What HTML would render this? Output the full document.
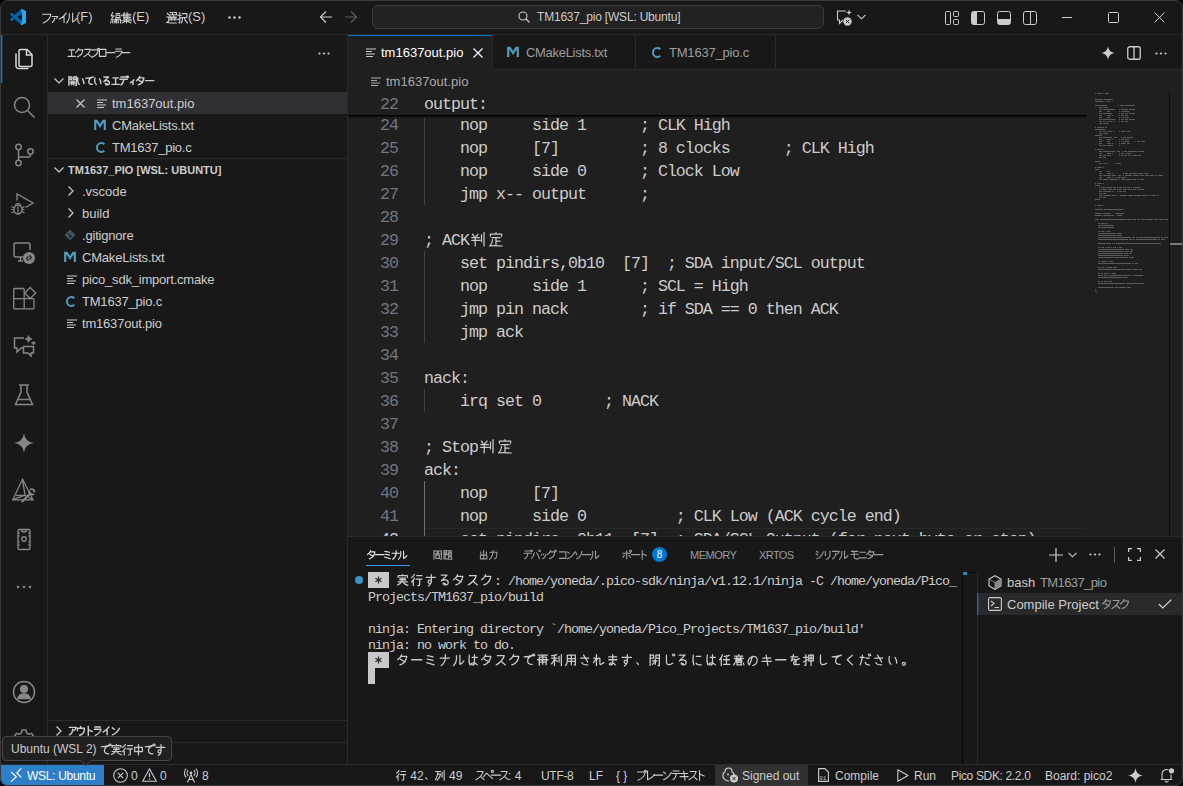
<!DOCTYPE html><html><head><meta charset="utf-8"><style>
*{box-sizing:border-box;margin:0;padding:0}
html,body{width:1183px;height:786px;overflow:hidden;background:#000}
body{font-family:"Liberation Sans",sans-serif;font-size:13px;color:#cccccc;position:relative}
.a{position:absolute}
#win{position:absolute;left:0;top:0;width:1183px;height:786px;background:#181818;border-radius:8px;overflow:hidden}
#frame{position:absolute;left:0;top:0;width:1183px;height:786px;border:1px solid #3a3a3a;border-radius:8px;pointer-events:none;z-index:50}
.hl{position:absolute;height:1px;background:#2b2b2b}
.vl{position:absolute;width:1px;background:#2b2b2b}
.t{position:absolute;white-space:pre;line-height:16px}
.t i,.code i,.term i{display:inline-block;font-style:normal;vertical-align:top;position:relative}
svg{position:absolute;overflow:visible}
.code{position:absolute;left:424px;font-family:"Liberation Mono",monospace;font-size:16.6667px;letter-spacing:-1px;white-space:pre;color:#cccccc;line-height:23px;height:23px}
.ln{position:absolute;left:340px;width:58px;text-align:right;font-family:"Liberation Mono",monospace;font-size:16.6667px;letter-spacing:-1px;white-space:pre;color:#6e7681;line-height:23px;height:23px}
.term{position:absolute;left:368px;font-family:"Liberation Mono",monospace;font-size:13.3333px;letter-spacing:-1px;white-space:pre;color:#cccccc;line-height:16px;height:16px}
.mm{position:absolute;height:1px;background:#8a8a8a;opacity:.55}
</style></head><body><div id="win">
<svg style="left:10px;top:9px" width="16" height="16" viewBox="0 0 100 100"><path fill="#0065A9" d="M96.5 10.8 75.9.9a6.2 6.2 0 0 0-7.1 1.2L29.4 38 12.2 25a4.2 4.2 0 0 0-5.3.2l-5.5 5a4.2 4.2 0 0 0 0 6.2L16.3 50 1.4 63.6a4.2 4.2 0 0 0 0 6.2l5.5 5a4.2 4.2 0 0 0 5.3.2l17.2-13 39.4 35.9a6.2 6.2 0 0 0 7.1 1.2l20.6-9.9a6.2 6.2 0 0 0 3.5-5.6V16.4a6.2 6.2 0 0 0-3.5-5.6zM75 72.7 45.1 50 75 27.3z"/><path fill="#2AA7F0" d="M96.5 10.8 75.9.9a6.2 6.2 0 0 0-7.1 1.2L75 27.3V72.7l-6.2 25.2a6.2 6.2 0 0 0 7.1 1.2l20.6-9.9a6.2 6.2 0 0 0 3.5-5.6V16.4a6.2 6.2 0 0 0-3.5-5.6z"/></svg>
<div class="t" style="left:42px;top:9px;font-size:13px;color:#cccccc;line-height:16px;"><i style="width:8.5px;height:16px"><svg style="left:-1.25px;top:2.50px" width="11.0" height="11.0" viewBox="0 0 10 10"><path d="M1.5 2h7.5c-.5 3.5-3 6.5-7 8" stroke="#cccccc" stroke-width="1.00" fill="none" stroke-linecap="round" stroke-linejoin="round"/></svg></i><i style="width:8.5px;height:16px"><svg style="left:-1.25px;top:2.50px" width="11.0" height="11.0" viewBox="0 0 10 10"><path transform="translate(1.5 3) scale(0.7)" d="M1.5 1.5h7.5c-.5 1.5-1.5 2.5-2.5 3.2M5 3.5c0 3-1 5-3.5 6" stroke="#cccccc" stroke-width="1.43" fill="none"/></svg></i><i style="width:8.5px;height:16px"><svg style="left:-1.25px;top:2.50px" width="11.0" height="11.0" viewBox="0 0 10 10"><path d="M7.5 1c-1.5 2.5-3.5 4-6.5 5.5M5.5 4v5.5" stroke="#cccccc" stroke-width="1.00" fill="none" stroke-linecap="round" stroke-linejoin="round"/></svg></i><i style="width:8.5px;height:16px"><svg style="left:-1.25px;top:2.50px" width="11.0" height="11.0" viewBox="0 0 10 10"><path d="M3 1.5v3c0 2-1 4-2.5 5.5M6 1v8c1.5-.5 2.5-1.5 3.5-3" stroke="#cccccc" stroke-width="1.00" fill="none" stroke-linecap="round" stroke-linejoin="round"/></svg></i>(F)</div>
<div class="t" style="left:110px;top:9px;font-size:13px;color:#cccccc;line-height:16px;"><i style="width:11px;height:16px"><svg style="left:0.00px;top:2.50px" width="11.0" height="11.0" viewBox="0 0 10 10"><path d="M2.5 .5 1 3.5h2.5L1 7h3.5M2.5 7v3M1 8.5 .5 10M4 8.5l.5 1.5M5.5 1.5h3.5M5.5 3h3.5v2H5.5V3c0 3-.5 5-1 7M6 6.5h3.5V10M6 6.5V10M7.5 6.5V10" stroke="#cccccc" stroke-width="1.00" fill="none" stroke-linecap="round" stroke-linejoin="round"/></svg></i><i style="width:11px;height:16px"><svg style="left:0.00px;top:2.50px" width="11.0" height="11.0" viewBox="0 0 10 10"><path d="M3 .5C2.5 2 1.5 3 .5 3.5M2.5 2.5v4M3 2h6M3 3.5h5.5M3 5h5.5M3 6.5h6M5.5 .5v6M.5 8h9M5 6.5v3.5M5 8 1 10M5 8l4 2" stroke="#cccccc" stroke-width="1.00" fill="none" stroke-linecap="round" stroke-linejoin="round"/></svg></i>(E)</div>
<div class="t" style="left:166px;top:9px;font-size:13px;color:#cccccc;line-height:16px;"><i style="width:11px;height:16px"><svg style="left:0.00px;top:2.50px" width="11.0" height="11.0" viewBox="0 0 10 10"><path d="M3.5 .5h2.5v2H3.5v2H6M7 .5h2.5v2H7v2h2.5M3.5 5.5h6M3.5 7h6M5 4.5v3M8 4.5v3M1 1l1.5 1.5M.5 4.5h2v4L.5 9.5c3 .5 6 .5 9 .5" stroke="#cccccc" stroke-width="1.00" fill="none" stroke-linecap="round" stroke-linejoin="round"/></svg></i><i style="width:11px;height:16px"><svg style="left:0.00px;top:2.50px" width="11.0" height="11.0" viewBox="0 0 10 10"><path d="M.5 3h3.5M2.5 .5v9c0 .5-.5.5-1 .3M.5 7l3.5-2M5 1.5h4v3.5H5c0 3-.5 4-1 5M6.5 5c.5 2 1.5 3.5 3 5" stroke="#cccccc" stroke-width="1.00" fill="none" stroke-linecap="round" stroke-linejoin="round"/></svg></i>(S)</div>
<svg style="left:228px;top:16px" width="13" height="3"><circle cx="1.5" cy="1.5" r="1.2" fill="#ccc"/><circle cx="6.5" cy="1.5" r="1.2" fill="#ccc"/><circle cx="11.5" cy="1.5" r="1.2" fill="#ccc"/></svg>
<svg style="left:319px;top:10px" width="14" height="14" viewBox="0 0 14 14"><path d="M13 7H1.5M7 1.5 1.5 7 7 12.5" stroke="#cccccc" stroke-width="1.2" fill="none"/></svg>
<svg style="left:344px;top:10px" width="14" height="14" viewBox="0 0 14 14"><path d="M1 7h11.5M7 1.5 12.5 7 7 12.5" stroke="#5c5c5c" stroke-width="1.2" fill="none"/></svg>
<div class="a" style="left:372px;top:5px;width:452px;height:24px;border:1px solid #3c3c3c;border-radius:6px;background:#222222"></div>
<svg style="left:518px;top:11px" width="12" height="12" viewBox="0 0 12 12"><circle cx="5" cy="5" r="4" stroke="#cccccc" stroke-width="1.1" fill="none"/><path d="M8 8 11.5 11.5" stroke="#cccccc" stroke-width="1.2"/></svg>
<div class="t" style="left:537px;top:9px;font-size:12px;color:#cccccc;line-height:16px;letter-spacing:-0.2px;">TM1637_pio [WSL: Ubuntu]</div>
<svg style="left:836px;top:9px" width="18" height="17" viewBox="0 0 18 17"><path d="M10 2H1.5v9H3.5v3.5L7 11" stroke="#cccccc" stroke-width="1.1" fill="none"/><path d="M13 0.5 13.8 2.7 16 3.5 13.8 4.3 13 6.5 12.2 4.3 10 3.5 12.2 2.7Z" fill="#cccccc"/><circle cx="11.5" cy="12.5" r="4.2" fill="#cccccc"/><path d="M9.9 10.9 13.1 14.1M13.1 10.9 9.9 14.1" stroke="#181818" stroke-width="1"/></svg>
<svg style="left:857px;top:14px" width="9" height="6" viewBox="0 0 9 6"><path d="M0.5 0.8 4.5 4.8 8.5 0.8" stroke="#cccccc" stroke-width="1.1" fill="none"/></svg>
<svg style="left:944px;top:10px" width="16" height="16" viewBox="0 0 16 16"><rect x="1.5" y="1.5" width="5" height="13" rx="1" stroke="#cccccc" fill="none"/><rect x="9.5" y="1.5" width="5" height="5" rx="1" stroke="#cccccc" fill="none"/><rect x="9.5" y="9.5" width="5" height="5" rx="1" stroke="#cccccc" fill="none"/></svg>
<svg style="left:970px;top:10px" width="16" height="16" viewBox="0 0 16 16"><rect x="1.5" y="1.5" width="13" height="13" rx="2" stroke="#cccccc" fill="none"/><path d="M2 2h5v12H2z" fill="#cccccc"/></svg>
<svg style="left:996px;top:10px" width="16" height="16" viewBox="0 0 16 16"><rect x="1.5" y="1.5" width="13" height="13" rx="2" stroke="#cccccc" fill="none"/><path d="M2 9h12v5H2z" fill="#cccccc"/></svg>
<svg style="left:1022px;top:10px" width="16" height="16" viewBox="0 0 16 16"><rect x="1.5" y="1.5" width="13" height="13" rx="2" stroke="#cccccc" fill="none"/><path d="M8.5 2v12" stroke="#cccccc"/></svg>
<svg style="left:1062px;top:17px" width="11" height="2"><rect x="0" y="0" width="10" height="1" fill="#cccccc"/></svg>
<svg style="left:1108px;top:12px" width="11" height="11"><rect x="0.5" y="0.5" width="10" height="10" rx="1" stroke="#cccccc" fill="none"/></svg>
<svg style="left:1154px;top:12px" width="11" height="11" viewBox="0 0 11 11"><path d="M0.5 0.5 10.5 10.5M10.5 0.5 0.5 10.5" stroke="#cccccc" stroke-width="1"/></svg>
<div class="hl" style="left:0;top:34px;width:1183px"></div>
<div class="vl" style="left:47px;top:35px;height:730px"></div>
<div class="a" style="left:1px;top:35px;width:1px;height:48px;background:#0078d4;box-shadow:1px 0 0 rgba(0,120,212,0.35)"></div>
<svg style="left:12px;top:47px" width="24" height="24" viewBox="0 0 24 24" fill="none" stroke="#d7d7d7" stroke-width="1.5"><path d="M8.5 2.5h6.5l5 5v10.5a1.5 1.5 0 0 1-1.5 1.5h-10a1.5 1.5 0 0 1-1.5-1.5V4a1.5 1.5 0 0 1 1.5-1.5z"/><path d="M14.5 2.5v5.5h5.5"/><path d="M4 6.5v12.5a2.5 2.5 0 0 0 2.5 2.5h10"/></svg>
<svg style="left:12px;top:95px" width="24" height="24" viewBox="0 0 24 24" fill="none" stroke="#868686" stroke-width="1.5"><circle cx="10" cy="10" r="7.5"/><path d="M15.5 15.5 22.5 22.5"/></svg>
<svg style="left:12px;top:143px" width="24" height="24" viewBox="0 0 24 24" fill="none" stroke="#868686" stroke-width="1.5"><circle cx="6.5" cy="4" r="2.7"/><circle cx="6.5" cy="20" r="2.7"/><circle cx="18.5" cy="8.5" r="2.7"/><path d="M6.5 6.7v10.6M18.5 11.2v0.8a2 2 0 0 1-2 2H6.5"/></svg>
<svg style="left:10px;top:192px" width="24" height="24" viewBox="0 0 24 24" fill="none" stroke="#868686" stroke-width="1.4"><path d="M7 8.5V2L23 11 15.5 15.5"/><path d="M4 17.5a4 4.5 0 0 1 8 0v0a4 4.5 0 0 1-8 0z"/><path d="M5.5 13.5a2.5 2 0 0 1 5 0M1.5 14.5l2.5 1.5M14.5 14.5 12 16M1.5 17.5h2.5M12 17.5h2.5M1.5 21l2.5-1.5M14.5 21 12 19.5M8 14.5v7.5" stroke-width="1.2"/></svg>
<svg style="left:12px;top:241px" width="24" height="24" viewBox="0 0 24 24" fill="none" stroke="#868686" stroke-width="1.5"><path d="M11 16H3.5A1.5 1.5 0 0 1 2 14.5v-11A1.5 1.5 0 0 1 3.5 2h13A1.5 1.5 0 0 1 18 3.5V9"/><path d="M6 20h5M8.5 16v4"/><circle cx="17" cy="17" r="6" fill="#868686" stroke="none"/><path d="M14.5 17.5l2-2M14.5 17.5l2 2M19.5 16.5l-2-2M19.5 16.5l-2 2" stroke="#181818" stroke-width="1.2"/></svg>
<svg style="left:12px;top:286px" width="24" height="24" viewBox="0 0 24 24" fill="none" stroke="#868686" stroke-width="1.3"><path d="M1.7 12.7V3.5a1 1 0 0 1 1-1h8.5a1 1 0 0 1 1 1v9.2H21a1 1 0 0 1 1 1v8.2a1 1 0 0 1-1 1H2.7a1 1 0 0 1-1-1z M1.7 12.7H12.2V22.9"/><path d="M18.2 1.5 23.7 7 18.2 12.5 12.7 7z"/></svg>
<svg style="left:12px;top:335px" width="24" height="24" viewBox="0 0 24 24" fill="none" stroke="#868686" stroke-width="1.5"><path d="M12 3H2.5v10h2.5v4l4-4h2"/><path d="M11.5 11.5h10v6.5h-2.5v3l-3-3h-4.5z"/><path d="M16.5 0.5l1 2.5 2.5 1-2.5 1-1 2.5-1-2.5-2.5-1 2.5-1z M21.5 6l.6 1.4 1.4.6-1.4.6-.6 1.4-.6-1.4-1.4-.6 1.4-.6z" fill="#868686" stroke-width="0.8"/></svg>
<svg style="left:12px;top:383px" width="24" height="24" viewBox="0 0 24 24" fill="none" stroke="#868686" stroke-width="1.5"><path d="M7 2h10M9 2v7L3.5 21.5h17L15 9V2"/><path d="M5.8 16.5h12.4"/></svg>
<svg style="left:14px;top:433px" width="20" height="20" viewBox="0 0 20 20"><path d="M10 0C10.8 6 14 9.2 20 10 14 10.8 10.8 14 10 20 9.2 14 6 10.8 0 10 6 9.2 9.2 6 10 0z" fill="#868686"/></svg>
<svg style="left:12px;top:477px" width="24" height="24" viewBox="0 0 24 24" fill="none" stroke="#868686" stroke-width="1.3"><path d="M10.5 2.3 0.8 22.8H21z M10.5 2.3 13 18.2 0.8 22.8M13 18.2 21 22.8M4 18.5 13 18.2"/><path d="M9.8 25 19 15.5" stroke-width="2"/><path d="M17.5 13.5a3 3 0 0 0 4.5 3.5M18 12.5a3 3 0 0 1 4.5 3" stroke-width="1.8"/></svg>
<svg style="left:12px;top:527px" width="24" height="24" viewBox="0 0 24 24" fill="none" stroke="#868686" stroke-width="1.4"><rect x="6" y="2.5" width="12" height="20" rx="1.5"/><circle cx="12" cy="12" r="2.2"/><path d="M9.5 2.5a2.5 2.5 0 0 0 5 0"/><path d="M6 6h2M6 9h2M6 15h2M6 18h2M16 6h2M16 9h2M16 15h2M16 18h2" stroke-width="1"/></svg>
<svg style="left:16px;top:585px" width="16" height="4"><circle cx="2" cy="2" r="1.3" fill="#868686"/><circle cx="8" cy="2" r="1.3" fill="#868686"/><circle cx="14" cy="2" r="1.3" fill="#868686"/></svg>
<svg style="left:12px;top:680px" width="24" height="24" viewBox="0 0 24 24" fill="none" stroke="#868686" stroke-width="1.5"><circle cx="12" cy="12" r="10.5"/><circle cx="12" cy="9" r="3.3" fill="#868686"/><path d="M6 18.5a6 4.5 0 0 1 12 0z" fill="#868686"/></svg>
<svg style="left:12px;top:728px" width="24" height="24" viewBox="0 0 24 24" fill="none" stroke="#868686" stroke-width="1.5"><path d="M10 2h4l.6 3 2.2 1.3 2.9-1 2 3.4-2.3 2v2.6l2.3 2-2 3.4-2.9-1-2.2 1.3-.6 3h-4l-.6-3-2.2-1.3-2.9 1-2-3.4 2.3-2v-2.6l-2.3-2 2-3.4 2.9 1L9.4 5z"/><circle cx="12" cy="12" r="3"/></svg>
<div class="vl" style="left:347px;top:35px;height:730px"></div>
<div class="t" style="left:68px;top:45px;font-size:11px;color:#cccccc;line-height:16px;"><i style="width:7.75px;height:16px"><svg style="left:-0.78px;top:3.35px" width="9.3" height="9.3" viewBox="0 0 10 10"><path d="M2 2h6M5 2v7M1 9h8" stroke="#cccccc" stroke-width="1.18" fill="none" stroke-linecap="round" stroke-linejoin="round"/></svg></i><i style="width:7.75px;height:16px"><svg style="left:-0.78px;top:3.35px" width="9.3" height="9.3" viewBox="0 0 10 10"><path d="M4 0.5c-.5 2-2 3.5-3.5 4.5M3.5 2h5c-.5 4-3 6.5-6 7.5" stroke="#cccccc" stroke-width="1.18" fill="none" stroke-linecap="round" stroke-linejoin="round"/></svg></i><i style="width:7.75px;height:16px"><svg style="left:-0.78px;top:3.35px" width="9.3" height="9.3" viewBox="0 0 10 10"><path d="M2 1.5h6c-1 3.5-3.5 6-7 8M5.5 6.5l3.5 3" stroke="#cccccc" stroke-width="1.18" fill="none" stroke-linecap="round" stroke-linejoin="round"/></svg></i><i style="width:7.75px;height:16px"><svg style="left:-0.78px;top:3.35px" width="9.3" height="9.3" viewBox="0 0 10 10"><path d="M1.5 2h7.5c-.5 3.5-3 6.5-7 8M9.2 1.3m-1 0a1 1 0 1 0 2 0a1 1 0 1 0-2 0" stroke="#cccccc" stroke-width="1.18" fill="none" stroke-linecap="round" stroke-linejoin="round"/></svg></i><i style="width:7.75px;height:16px"><svg style="left:-0.78px;top:3.35px" width="9.3" height="9.3" viewBox="0 0 10 10"><path d="M1.5 1.5h7v7.5h-7z" stroke="#cccccc" stroke-width="1.18" fill="none" stroke-linecap="round" stroke-linejoin="round"/></svg></i><i style="width:7.75px;height:16px"><svg style="left:-0.78px;top:3.35px" width="9.3" height="9.3" viewBox="0 0 10 10"><path d="M0.5 5h9" stroke="#cccccc" stroke-width="1.18" fill="none" stroke-linecap="round" stroke-linejoin="round"/></svg></i><i style="width:7.75px;height:16px"><svg style="left:-0.78px;top:3.35px" width="9.3" height="9.3" viewBox="0 0 10 10"><path d="M2 1h6M1.5 3.5h7c-.5 3-2.5 5-6 6.5" stroke="#cccccc" stroke-width="1.18" fill="none" stroke-linecap="round" stroke-linejoin="round"/></svg></i><i style="width:7.75px;height:16px"><svg style="left:-0.78px;top:3.35px" width="9.3" height="9.3" viewBox="0 0 10 10"><path d="M0.5 5h9" stroke="#cccccc" stroke-width="1.18" fill="none" stroke-linecap="round" stroke-linejoin="round"/></svg></i></div>
<svg style="left:318px;top:52px" width="12" height="3"><circle cx="1.5" cy="1.5" r="1.1" fill="#ccc"/><circle cx="6" cy="1.5" r="1.1" fill="#ccc"/><circle cx="10.5" cy="1.5" r="1.1" fill="#ccc"/></svg>
<svg style="left:54px;top:78px" width="10" height="6" viewBox="0 0 10 6"><path d="M0.5 0.5 5 5 9.5 0.5" stroke="#cccccc" stroke-width="1.2" fill="none"/></svg>
<div class="t" style="left:68px;top:73px;font-size:11px;color:#cccccc;line-height:16px;font-weight:bold;"><i style="width:8.6px;height:16px"><svg style="left:-0.35px;top:3.35px" width="9.3" height="9.3" viewBox="0 0 10 10"><path d="M1 .5v9.5M1 1h3v2.5H1M9 .5v9.5H8M9 1H6v2.5h3M3 5.5h4M2.5 7.5h5M4 5.5v4M6 5.5v4" stroke="#cccccc" stroke-width="1.56" fill="none" stroke-linecap="round" stroke-linejoin="round"/></svg></i><i style="width:8.6px;height:16px"><svg style="left:-0.35px;top:3.35px" width="9.3" height="9.3" viewBox="0 0 10 10"><path d="M2 2c-.5 3 0 6 1.5 7M7 3c1 1.5 1.5 3 1.5 5" stroke="#cccccc" stroke-width="1.56" fill="none" stroke-linecap="round" stroke-linejoin="round"/></svg></i><i style="width:8.6px;height:16px"><svg style="left:-0.35px;top:3.35px" width="9.3" height="9.3" viewBox="0 0 10 10"><path d="M1 2.5c2.5 0 5-.5 8-1.5-3 1-5 3-5 5s1.5 3 4 3" stroke="#cccccc" stroke-width="1.56" fill="none" stroke-linecap="round" stroke-linejoin="round"/></svg></i><i style="width:8.6px;height:16px"><svg style="left:-0.35px;top:3.35px" width="9.3" height="9.3" viewBox="0 0 10 10"><path d="M2 2c-.5 3 0 6 1.5 7M7 3c1 1.5 1.5 3 1.5 5" stroke="#cccccc" stroke-width="1.56" fill="none" stroke-linecap="round" stroke-linejoin="round"/></svg></i><i style="width:8.6px;height:16px"><svg style="left:-0.35px;top:3.35px" width="9.3" height="9.3" viewBox="0 0 10 10"><path d="M2 1h5L2 6c2-1.5 6-1.5 6 1.5 0 2-3 2.5-4 1.5s0-1.5 1.5-.5" stroke="#cccccc" stroke-width="1.56" fill="none" stroke-linecap="round" stroke-linejoin="round"/></svg></i><i style="width:8.6px;height:16px"><svg style="left:-0.35px;top:3.35px" width="9.3" height="9.3" viewBox="0 0 10 10"><path d="M2 2h6M5 2v7M1 9h8" stroke="#cccccc" stroke-width="1.56" fill="none" stroke-linecap="round" stroke-linejoin="round"/></svg></i><i style="width:8.6px;height:16px"><svg style="left:-0.35px;top:3.35px" width="9.3" height="9.3" viewBox="0 0 10 10"><path d="M2 1h6M1 3.5h8M5 3.5c0 3-1 5-3 6M8.2 0.3l.7 1.4M9.5 0l.7 1.4" stroke="#cccccc" stroke-width="1.56" fill="none" stroke-linecap="round" stroke-linejoin="round"/></svg></i><i style="width:8.6px;height:16px"><svg style="left:-0.35px;top:3.35px" width="9.3" height="9.3" viewBox="0 0 10 10"><path transform="translate(1.5 3) scale(0.7)" d="M7.5 1c-1.5 2.5-3.5 4-6.5 5.5M5.5 4v5.5" stroke="#cccccc" stroke-width="2.23" fill="none"/></svg></i><i style="width:8.6px;height:16px"><svg style="left:-0.35px;top:3.35px" width="9.3" height="9.3" viewBox="0 0 10 10"><path d="M4 0.5c-.5 2-2 3.5-3.5 4.5M3.5 2h5c-.5 4-3 6.5-6 7.5M3 4.5l4 2.5" stroke="#cccccc" stroke-width="1.56" fill="none" stroke-linecap="round" stroke-linejoin="round"/></svg></i><i style="width:8.6px;height:16px"><svg style="left:-0.35px;top:3.35px" width="9.3" height="9.3" viewBox="0 0 10 10"><path d="M0.5 5h9" stroke="#cccccc" stroke-width="1.56" fill="none" stroke-linecap="round" stroke-linejoin="round"/></svg></i></div>
<div class="a" style="left:48px;top:92px;width:299px;height:22px;background:#303034"></div>
<svg style="left:76px;top:99px" width="9" height="9" viewBox="0 0 9 9"><path d="M0.5 0.5 8.5 8.5M8.5 0.5 0.5 8.5" stroke="#cccccc" stroke-width="1.1"/></svg>
<svg style="left:97px;top:99px" width="10" height="9" viewBox="0 0 10 9"><path d="M0 1h10M0 3.5h6M0 6h9M0 8.5h7" stroke="#cccccc" stroke-width="1.2"/></svg>
<div class="t" style="left:112px;top:96px;font-size:13px;color:#cccccc;line-height:16px;">tm1637out.pio</div>
<svg style="left:94px;top:120px" width="12" height="10" viewBox="0 0 12 10"><path d="M1.2 10V0.8h1.6L6 6 9.2 0.8h1.6V10" stroke="#519aba" stroke-width="2.2" fill="none" stroke-linejoin="miter"/></svg>
<div class="t" style="left:112px;top:118px;font-size:13px;color:#cccccc;line-height:16px;letter-spacing:-0.25px;">CMakeLists.txt</div>
<svg style="left:96px;top:142px" width="9" height="11" viewBox="0 0 9 11"><path d="M8.3 2.2A4.2 4.2 0 0 0 5.2 1 4.4 4.4 0 0 0 1 5.5 4.4 4.4 0 0 0 5.2 10a4.2 4.2 0 0 0 3.1-1.2" stroke="#519aba" stroke-width="2" fill="none"/></svg>
<div class="t" style="left:112px;top:140px;font-size:13px;color:#cccccc;line-height:16px;letter-spacing:-0.25px;">TM1637_pio.c</div>
<div class="hl" style="left:48px;top:158px;width:299px"></div>
<svg style="left:54px;top:167px" width="10" height="6" viewBox="0 0 10 6"><path d="M0.5 0.5 5 5 9.5 0.5" stroke="#cccccc" stroke-width="1.2" fill="none"/></svg>
<div class="t" style="left:68px;top:162px;font-size:11px;color:#cccccc;line-height:16px;font-weight:bold;">TM1637_PIO [WSL: UBUNTU]</div>
<svg style="left:68px;top:186px" width="6" height="10" viewBox="0 0 6 10"><path d="M0.5 0.5 5 5 0.5 9.5" stroke="#cccccc" stroke-width="1.2" fill="none"/></svg>
<div class="t" style="left:82px;top:184px;font-size:13px;color:#cccccc;line-height:16px;letter-spacing:0px;">.vscode</div>
<svg style="left:68px;top:208px" width="6" height="10" viewBox="0 0 6 10"><path d="M0.5 0.5 5 5 0.5 9.5" stroke="#cccccc" stroke-width="1.2" fill="none"/></svg>
<div class="t" style="left:82px;top:206px;font-size:13px;color:#cccccc;line-height:16px;letter-spacing:0px;">build</div>
<svg style="left:64px;top:229px" width="12" height="12" viewBox="0 0 12 12"><path d="M6 0.5 11.5 6 6 11.5 0.5 6z" fill="#41535b"/><path d="M4 4l4 4M6 6V9" stroke="#181818" stroke-width="1"/></svg>
<div class="t" style="left:82px;top:228px;font-size:13px;color:#cccccc;line-height:16px;letter-spacing:-0.2px;">.gitignore</div>
<svg style="left:64px;top:252px" width="12" height="10" viewBox="0 0 12 10"><path d="M1.2 10V0.8h1.6L6 6 9.2 0.8h1.6V10" stroke="#519aba" stroke-width="2.2" fill="none" stroke-linejoin="miter"/></svg>
<div class="t" style="left:82px;top:250px;font-size:13px;color:#cccccc;line-height:16px;letter-spacing:-0.2px;">CMakeLists.txt</div>
<svg style="left:67px;top:275px" width="10" height="9" viewBox="0 0 10 9"><path d="M0 1h10M0 3.5h6M0 6h9M0 8.5h7" stroke="#cccccc" stroke-width="1.2"/></svg>
<div class="t" style="left:82px;top:272px;font-size:13px;color:#cccccc;line-height:16px;letter-spacing:-0.2px;">pico_sdk_import.cmake</div>
<svg style="left:66px;top:296px" width="9" height="11" viewBox="0 0 9 11"><path d="M8.3 2.2A4.2 4.2 0 0 0 5.2 1 4.4 4.4 0 0 0 1 5.5 4.4 4.4 0 0 0 5.2 10a4.2 4.2 0 0 0 3.1-1.2" stroke="#519aba" stroke-width="2" fill="none"/></svg>
<div class="t" style="left:82px;top:294px;font-size:13px;color:#cccccc;line-height:16px;letter-spacing:-0.2px;">TM1637_pio.c</div>
<svg style="left:67px;top:319px" width="10" height="9" viewBox="0 0 10 9"><path d="M0 1h10M0 3.5h6M0 6h9M0 8.5h7" stroke="#cccccc" stroke-width="1.2"/></svg>
<div class="t" style="left:82px;top:316px;font-size:13px;color:#cccccc;line-height:16px;letter-spacing:-0.2px;">tm1637out.pio</div>
<div class="hl" style="left:48px;top:720px;width:299px"></div>
<svg style="left:56px;top:726px" width="6" height="10" viewBox="0 0 6 10"><path d="M0.5 0.5 5 5 0.5 9.5" stroke="#cccccc" stroke-width="1.2" fill="none"/></svg>
<div class="t" style="left:68px;top:723px;font-size:11px;color:#cccccc;line-height:16px;font-weight:bold;"><i style="width:8.6px;height:16px"><svg style="left:-0.35px;top:3.35px" width="9.3" height="9.3" viewBox="0 0 10 10"><path d="M1.5 1.5h7.5c-.5 1.5-1.5 2.5-2.5 3.2M5 3.5c0 3-1 5-3.5 6" stroke="#cccccc" stroke-width="1.56" fill="none" stroke-linecap="round" stroke-linejoin="round"/></svg></i><i style="width:8.6px;height:16px"><svg style="left:-0.35px;top:3.35px" width="9.3" height="9.3" viewBox="0 0 10 10"><path d="M5 0.5v2M1.5 2.5v2.5M1.5 2.5h7.5v1.5c0 3-2 5-5 6" stroke="#cccccc" stroke-width="1.56" fill="none" stroke-linecap="round" stroke-linejoin="round"/></svg></i><i style="width:8.6px;height:16px"><svg style="left:-0.35px;top:3.35px" width="9.3" height="9.3" viewBox="0 0 10 10"><path d="M3.5 0.5v9.5M3.5 4l4.5 2" stroke="#cccccc" stroke-width="1.56" fill="none" stroke-linecap="round" stroke-linejoin="round"/></svg></i><i style="width:8.6px;height:16px"><svg style="left:-0.35px;top:3.35px" width="9.3" height="9.3" viewBox="0 0 10 10"><path d="M2 1h6M1.5 3.5h7c-.5 3-2.5 5-6 6.5" stroke="#cccccc" stroke-width="1.56" fill="none" stroke-linecap="round" stroke-linejoin="round"/></svg></i><i style="width:8.6px;height:16px"><svg style="left:-0.35px;top:3.35px" width="9.3" height="9.3" viewBox="0 0 10 10"><path d="M7.5 1c-1.5 2.5-3.5 4-6.5 5.5M5.5 4v5.5" stroke="#cccccc" stroke-width="1.56" fill="none" stroke-linecap="round" stroke-linejoin="round"/></svg></i><i style="width:8.6px;height:16px"><svg style="left:-0.35px;top:3.35px" width="9.3" height="9.3" viewBox="0 0 10 10"><path d="M1.5 2l2 1.5M1.5 9.5c3-1 6-3.5 7.5-7" stroke="#cccccc" stroke-width="1.56" fill="none" stroke-linecap="round" stroke-linejoin="round"/></svg></i></div>
<div class="hl" style="left:48px;top:742px;width:299px"></div>
<svg style="left:56px;top:748px" width="6" height="10" viewBox="0 0 6 10"><path d="M0.5 0.5 5 5 0.5 9.5" stroke="#cccccc" stroke-width="1.2" fill="none"/></svg>
<div class="t" style="left:68px;top:745px;font-size:11px;color:#cccccc;line-height:16px;font-weight:bold;"><i style="width:8.6px;height:16px"><svg style="left:-0.35px;top:3.35px" width="9.3" height="9.3" viewBox="0 0 10 10"><path d="M4 0.5c-.5 2-2 3.5-3.5 4.5M3.5 2h5c-.5 4-3 6.5-6 7.5M3 4.5l4 2.5" stroke="#cccccc" stroke-width="1.56" fill="none" stroke-linecap="round" stroke-linejoin="round"/></svg></i><i style="width:8.6px;height:16px"><svg style="left:-0.35px;top:3.35px" width="9.3" height="9.3" viewBox="0 0 10 10"><path d="M7.5 1c-1.5 2.5-3.5 4-6.5 5.5M5.5 4v5.5" stroke="#cccccc" stroke-width="1.56" fill="none" stroke-linecap="round" stroke-linejoin="round"/></svg></i><i style="width:8.6px;height:16px"><svg style="left:-0.35px;top:3.35px" width="9.3" height="9.3" viewBox="0 0 10 10"><path d="M4.5 1c-1 3-2 5.5-3.5 8h8M7 6l2 3.5" stroke="#cccccc" stroke-width="1.56" fill="none" stroke-linecap="round" stroke-linejoin="round"/></svg></i><i style="width:8.6px;height:16px"><svg style="left:-0.35px;top:3.35px" width="9.3" height="9.3" viewBox="0 0 10 10"><path d="M2 1h6M1.5 3.5h7c-.5 3-2.5 5-6 6.5" stroke="#cccccc" stroke-width="1.56" fill="none" stroke-linecap="round" stroke-linejoin="round"/></svg></i><i style="width:8.6px;height:16px"><svg style="left:-0.35px;top:3.35px" width="9.3" height="9.3" viewBox="0 0 10 10"><path d="M7.5 1c-1.5 2.5-3.5 4-6.5 5.5M5.5 4v5.5" stroke="#cccccc" stroke-width="1.56" fill="none" stroke-linecap="round" stroke-linejoin="round"/></svg></i><i style="width:8.6px;height:16px"><svg style="left:-0.35px;top:3.35px" width="9.3" height="9.3" viewBox="0 0 10 10"><path d="M1.5 2l2 1.5M1.5 9.5c3-1 6-3.5 7.5-7" stroke="#cccccc" stroke-width="1.56" fill="none" stroke-linecap="round" stroke-linejoin="round"/></svg></i></div>
<div class="a" style="left:348px;top:35px;width:144px;height:35px;background:#1f1f1f"></div>
<div class="a" style="left:348px;top:35px;width:144px;height:1px;background:#0078d4"></div>
<div class="vl" style="left:492px;top:35px;height:34px"></div>
<div class="vl" style="left:635px;top:35px;height:34px"></div>
<div class="vl" style="left:775px;top:35px;height:34px"></div>
<div class="hl" style="left:493px;top:69px;width:689px"></div>
<svg style="left:366px;top:48px" width="10" height="9" viewBox="0 0 10 9"><path d="M0 1h10M0 3.5h6M0 6h9M0 8.5h7" stroke="#cccccc" stroke-width="1.2"/></svg>
<div class="t" style="left:381px;top:45px;font-size:13px;color:#ffffff;line-height:16px;">tm1637out.pio</div>
<svg style="left:473px;top:48px" width="10" height="10" viewBox="0 0 10 10"><path d="M0.5 0.5 9.5 9.5M9.5 0.5 0.5 9.5" stroke="#ffffff" stroke-width="1.2"/></svg>
<svg style="left:507px;top:47px" width="12" height="10" viewBox="0 0 12 10"><path d="M1.2 10V0.8h1.6L6 6 9.2 0.8h1.6V10" stroke="#519aba" stroke-width="2.2" fill="none" stroke-linejoin="miter"/></svg>
<div class="t" style="left:526px;top:45px;font-size:13px;color:#9d9d9d;line-height:16px;letter-spacing:-0.3px;">CMakeLists.txt</div>
<svg style="left:652px;top:47px" width="9" height="11" viewBox="0 0 9 11"><path d="M8.3 2.2A4.2 4.2 0 0 0 5.2 1 4.4 4.4 0 0 0 1 5.5 4.4 4.4 0 0 0 5.2 10a4.2 4.2 0 0 0 3.1-1.2" stroke="#519aba" stroke-width="2" fill="none"/></svg>
<div class="t" style="left:669px;top:45px;font-size:13px;color:#9d9d9d;line-height:16px;letter-spacing:-0.2px;">TM1637_pio.c</div>
<svg style="left:1101px;top:46px" width="14" height="14" viewBox="0 0 20 20"><path d="M10 0C10.8 6 14 9.2 20 10 14 10.8 10.8 14 10 20 9.2 14 6 10.8 0 10 6 9.2 9.2 6 10 0z" fill="#cccccc"/></svg>
<svg style="left:1127px;top:46px" width="14" height="14" viewBox="0 0 14 14"><rect x="0.75" y="0.75" width="12.5" height="12.5" rx="2" stroke="#cccccc" stroke-width="1.3" fill="none"/><path d="M7 1v12" stroke="#cccccc" stroke-width="1.3"/></svg>
<svg style="left:1155px;top:52px" width="12" height="3"><circle cx="1.5" cy="1.5" r="1.1" fill="#ccc"/><circle cx="6" cy="1.5" r="1.1" fill="#ccc"/><circle cx="10.5" cy="1.5" r="1.1" fill="#ccc"/></svg>
<div class="a" style="left:348px;top:70px;width:834px;height:466px;background:#1f1f1f"></div>
<svg style="left:371px;top:77px" width="10" height="9" viewBox="0 0 10 9"><path d="M0 1h10M0 3.5h6M0 6h9M0 8.5h7" stroke="#a9a9a9" stroke-width="1.2"/></svg>
<div class="t" style="left:386px;top:74px;font-size:13px;color:#a9a9a9;line-height:16px;">tm1637out.pio</div>
<div class="a" style="left:348px;top:70px;width:834px;height:466px;overflow:hidden">
<div class="a" style="left:-348px;top:-70px;width:1183px;height:786px">
<div class="a" style="left:424px;top:113px;width:1px;height:92px;background:#404040"></div>
<div class="a" style="left:424px;top:251px;width:1px;height:92px;background:#404040"></div>
<div class="a" style="left:424px;top:389px;width:1px;height:23px;background:#404040"></div>
<div class="a" style="left:424px;top:481px;width:1px;height:69px;background:#6e6e6e"></div>
<div class="a" style="left:426px;top:528px;width:660px;height:23px;border:1px solid #282828;border-left:none;border-right:none"></div>
<div class="ln" style="top:114px;color:#6e7681">24</div>
<div class="code" style="top:114px">    nop     side 1      ; CLK High</div>
<div class="ln" style="top:137px;color:#6e7681">25</div>
<div class="code" style="top:137px">    nop     [7]         ; 8 clocks      ; CLK High</div>
<div class="ln" style="top:160px;color:#6e7681">26</div>
<div class="code" style="top:160px">    nop     side 0      ; Clock Low</div>
<div class="ln" style="top:183px;color:#6e7681">27</div>
<div class="code" style="top:183px">    jmp x-- output      ;</div>
<div class="ln" style="top:206px;color:#6e7681">28</div>
<div class="ln" style="top:229px;color:#6e7681">29</div>
<div class="code" style="top:229px">; ACK<i style="width:18px;height:23px"><svg style="left:2.00px;top:3.20px" width="14" height="14" viewBox="0 0 10 10"><path d="M1 1.5l1 1.5M5 1.5 4 3M.5 4h5.5M.5 6h6M3 3v7M7.5 2v5M9.3 .5v9.5" stroke="#cccccc" stroke-width="0.89" fill="none" stroke-linecap="round" stroke-linejoin="round"/></svg></i><i style="width:18px;height:23px"><svg style="left:2.00px;top:3.20px" width="14" height="14" viewBox="0 0 10 10"><path d="M5 .5v1M1 3V1.5h8V3M2 4h6M5 4v5M5 6.5h3M2.5 5.5c0 2.5-1 3.5-2 4.5 3-.5 6 0 9 0" stroke="#cccccc" stroke-width="0.89" fill="none" stroke-linecap="round" stroke-linejoin="round"/></svg></i></div>
<div class="ln" style="top:252px;color:#6e7681">30</div>
<div class="code" style="top:252px">    set pindirs,0b10  [7]  ; SDA input/SCL output</div>
<div class="ln" style="top:275px;color:#6e7681">31</div>
<div class="code" style="top:275px">    nop     side 1      ; SCL = High</div>
<div class="ln" style="top:298px;color:#6e7681">32</div>
<div class="code" style="top:298px">    jmp pin nack        ; if SDA == 0 then ACK</div>
<div class="ln" style="top:321px;color:#6e7681">33</div>
<div class="code" style="top:321px">    jmp ack</div>
<div class="ln" style="top:344px;color:#6e7681">34</div>
<div class="ln" style="top:367px;color:#6e7681">35</div>
<div class="code" style="top:367px">nack:</div>
<div class="ln" style="top:390px;color:#6e7681">36</div>
<div class="code" style="top:390px">    irq set 0       ; NACK</div>
<div class="ln" style="top:413px;color:#6e7681">37</div>
<div class="ln" style="top:436px;color:#6e7681">38</div>
<div class="code" style="top:436px">; Stop<i style="width:18px;height:23px"><svg style="left:2.00px;top:3.20px" width="14" height="14" viewBox="0 0 10 10"><path d="M1 1.5l1 1.5M5 1.5 4 3M.5 4h5.5M.5 6h6M3 3v7M7.5 2v5M9.3 .5v9.5" stroke="#cccccc" stroke-width="0.89" fill="none" stroke-linecap="round" stroke-linejoin="round"/></svg></i><i style="width:18px;height:23px"><svg style="left:2.00px;top:3.20px" width="14" height="14" viewBox="0 0 10 10"><path d="M5 .5v1M1 3V1.5h8V3M2 4h6M5 4v5M5 6.5h3M2.5 5.5c0 2.5-1 3.5-2 4.5 3-.5 6 0 9 0" stroke="#cccccc" stroke-width="0.89" fill="none" stroke-linecap="round" stroke-linejoin="round"/></svg></i></div>
<div class="ln" style="top:459px;color:#6e7681">39</div>
<div class="code" style="top:459px">ack:</div>
<div class="ln" style="top:482px;color:#6e7681">40</div>
<div class="code" style="top:482px">    nop     [7]</div>
<div class="ln" style="top:505px;color:#6e7681">41</div>
<div class="code" style="top:505px">    nop     side 0          ; CLK Low (ACK cycle end)</div>
<div class="ln" style="top:528px;color:#cccccc">42</div>
<div class="code" style="top:528px">    set pindirs, 0b11  [7]  ; SDA/SCL Output (for next byte or stop)</div>
<div class="a" style="left:348px;top:92px;width:739px;height:23px;background:#1f1f1f"></div>
<div class="a" style="left:348px;top:115px;width:739px;height:1px;background:#000000"></div>
<div class="a" style="left:348px;top:116px;width:739px;height:2px;background:linear-gradient(#0a0a0a,#1f1f1f)"></div>
<div class="ln" style="top:93px">22</div>
<div class="code" style="top:93px">output:</div>
</div></div>
<div class="mm" style="left:1095px;top:93px;width:1px"></div>
<div class="mm" style="left:1097px;top:93px;width:5px"></div>
<div class="mm" style="left:1103px;top:93px;width:1px"></div>
<div class="mm" style="left:1105px;top:93px;width:4px"></div>
<div class="mm" style="left:1095px;top:99px;width:8px"></div>
<div class="mm" style="left:1104px;top:99px;width:9px"></div>
<div class="mm" style="left:1095px;top:101px;width:9px"></div>
<div class="mm" style="left:1105px;top:101px;width:1px"></div>
<div class="mm" style="left:1107px;top:101px;width:3px"></div>
<div class="mm" style="left:1095px;top:105px;width:12px"></div>
<div class="mm" style="left:1118px;top:105px;width:1px"></div>
<div class="mm" style="left:1120px;top:105px;width:4px"></div>
<div class="mm" style="left:1125px;top:105px;width:10px"></div>
<div class="mm" style="left:1099px;top:107px;width:3px"></div>
<div class="mm" style="left:1103px;top:107px;width:5px"></div>
<div class="mm" style="left:1099px;top:109px;width:3px"></div>
<div class="mm" style="left:1103px;top:109px;width:12px"></div>
<div class="mm" style="left:1119px;top:109px;width:1px"></div>
<div class="mm" style="left:1121px;top:109px;width:7px"></div>
<div class="mm" style="left:1129px;top:109px;width:6px"></div>
<div class="mm" style="left:1099px;top:111px;width:3px"></div>
<div class="mm" style="left:1107px;top:111px;width:3px"></div>
<div class="mm" style="left:1119px;top:111px;width:1px"></div>
<div class="mm" style="left:1121px;top:111px;width:1px"></div>
<div class="mm" style="left:1123px;top:111px;width:6px"></div>
<div class="mm" style="left:1099px;top:113px;width:3px"></div>
<div class="mm" style="left:1103px;top:113px;width:9px"></div>
<div class="mm" style="left:1119px;top:113px;width:1px"></div>
<div class="mm" style="left:1121px;top:113px;width:3px"></div>
<div class="mm" style="left:1125px;top:113px;width:3px"></div>
<div class="mm" style="left:1129px;top:113px;width:6px"></div>
<div class="mm" style="left:1099px;top:115px;width:3px"></div>
<div class="mm" style="left:1107px;top:115px;width:4px"></div>
<div class="mm" style="left:1112px;top:115px;width:1px"></div>
<div class="mm" style="left:1119px;top:115px;width:1px"></div>
<div class="mm" style="left:1121px;top:115px;width:3px"></div>
<div class="mm" style="left:1125px;top:115px;width:3px"></div>
<div class="mm" style="left:1099px;top:117px;width:3px"></div>
<div class="mm" style="left:1107px;top:117px;width:3px"></div>
<div class="mm" style="left:1119px;top:117px;width:1px"></div>
<div class="mm" style="left:1121px;top:117px;width:1px"></div>
<div class="mm" style="left:1123px;top:117px;width:6px"></div>
<div class="mm" style="left:1099px;top:119px;width:3px"></div>
<div class="mm" style="left:1103px;top:119px;width:12px"></div>
<div class="mm" style="left:1119px;top:119px;width:1px"></div>
<div class="mm" style="left:1121px;top:119px;width:3px"></div>
<div class="mm" style="left:1125px;top:119px;width:3px"></div>
<div class="mm" style="left:1129px;top:119px;width:6px"></div>
<div class="mm" style="left:1099px;top:121px;width:3px"></div>
<div class="mm" style="left:1103px;top:121px;width:2px"></div>
<div class="mm" style="left:1106px;top:121px;width:1px"></div>
<div class="mm" style="left:1108px;top:121px;width:4px"></div>
<div class="mm" style="left:1113px;top:121px;width:1px"></div>
<div class="mm" style="left:1119px;top:121px;width:1px"></div>
<div class="mm" style="left:1121px;top:121px;width:3px"></div>
<div class="mm" style="left:1125px;top:121px;width:3px"></div>
<div class="mm" style="left:1099px;top:123px;width:3px"></div>
<div class="mm" style="left:1103px;top:123px;width:6px"></div>
<div class="mm" style="left:1095px;top:127px;width:1px"></div>
<div class="mm" style="left:1097px;top:127px;width:7px"></div>
<div class="mm" style="left:1105px;top:127px;width:2px"></div>
<div class="mm" style="left:1095px;top:129px;width:10px"></div>
<div class="mm" style="left:1099px;top:131px;width:3px"></div>
<div class="mm" style="left:1103px;top:131px;width:2px"></div>
<div class="mm" style="left:1106px;top:131px;width:1px"></div>
<div class="mm" style="left:1108px;top:131px;width:4px"></div>
<div class="mm" style="left:1113px;top:131px;width:1px"></div>
<div class="mm" style="left:1119px;top:131px;width:1px"></div>
<div class="mm" style="left:1121px;top:131px;width:5px"></div>
<div class="mm" style="left:1127px;top:131px;width:3px"></div>
<div class="mm" style="left:1099px;top:133px;width:3px"></div>
<div class="mm" style="left:1103px;top:133px;width:5px"></div>
<div class="mm" style="left:1095px;top:135px;width:7px"></div>
<div class="mm" style="left:1099px;top:137px;width:3px"></div>
<div class="mm" style="left:1103px;top:137px;width:9px"></div>
<div class="mm" style="left:1114px;top:137px;width:3px"></div>
<div class="mm" style="left:1121px;top:137px;width:1px"></div>
<div class="mm" style="left:1123px;top:137px;width:3px"></div>
<div class="mm" style="left:1127px;top:137px;width:6px"></div>
<div class="mm" style="left:1099px;top:139px;width:3px"></div>
<div class="mm" style="left:1107px;top:139px;width:4px"></div>
<div class="mm" style="left:1112px;top:139px;width:1px"></div>
<div class="mm" style="left:1119px;top:139px;width:1px"></div>
<div class="mm" style="left:1121px;top:139px;width:3px"></div>
<div class="mm" style="left:1125px;top:139px;width:4px"></div>
<div class="mm" style="left:1099px;top:141px;width:3px"></div>
<div class="mm" style="left:1107px;top:141px;width:3px"></div>
<div class="mm" style="left:1119px;top:141px;width:1px"></div>
<div class="mm" style="left:1121px;top:141px;width:1px"></div>
<div class="mm" style="left:1123px;top:141px;width:6px"></div>
<div class="mm" style="left:1135px;top:141px;width:1px"></div>
<div class="mm" style="left:1137px;top:141px;width:3px"></div>
<div class="mm" style="left:1141px;top:141px;width:4px"></div>
<div class="mm" style="left:1099px;top:143px;width:3px"></div>
<div class="mm" style="left:1107px;top:143px;width:4px"></div>
<div class="mm" style="left:1112px;top:143px;width:1px"></div>
<div class="mm" style="left:1119px;top:143px;width:1px"></div>
<div class="mm" style="left:1121px;top:143px;width:5px"></div>
<div class="mm" style="left:1127px;top:143px;width:3px"></div>
<div class="mm" style="left:1099px;top:145px;width:3px"></div>
<div class="mm" style="left:1103px;top:145px;width:3px"></div>
<div class="mm" style="left:1107px;top:145px;width:6px"></div>
<div class="mm" style="left:1119px;top:145px;width:1px"></div>
<div class="mm" style="left:1095px;top:149px;width:1px"></div>
<div class="mm" style="left:1097px;top:149px;width:4px"></div>
<div class="mm" style="left:1102px;top:149px;width:1px"></div>
<div class="mm" style="left:1099px;top:151px;width:3px"></div>
<div class="mm" style="left:1103px;top:151px;width:12px"></div>
<div class="mm" style="left:1117px;top:151px;width:3px"></div>
<div class="mm" style="left:1122px;top:151px;width:1px"></div>
<div class="mm" style="left:1124px;top:151px;width:3px"></div>
<div class="mm" style="left:1128px;top:151px;width:9px"></div>
<div class="mm" style="left:1138px;top:151px;width:6px"></div>
<div class="mm" style="left:1099px;top:153px;width:3px"></div>
<div class="mm" style="left:1107px;top:153px;width:4px"></div>
<div class="mm" style="left:1112px;top:153px;width:1px"></div>
<div class="mm" style="left:1119px;top:153px;width:1px"></div>
<div class="mm" style="left:1121px;top:153px;width:3px"></div>
<div class="mm" style="left:1125px;top:153px;width:1px"></div>
<div class="mm" style="left:1127px;top:153px;width:4px"></div>
<div class="mm" style="left:1099px;top:155px;width:3px"></div>
<div class="mm" style="left:1103px;top:155px;width:3px"></div>
<div class="mm" style="left:1107px;top:155px;width:4px"></div>
<div class="mm" style="left:1119px;top:155px;width:1px"></div>
<div class="mm" style="left:1121px;top:155px;width:2px"></div>
<div class="mm" style="left:1124px;top:155px;width:3px"></div>
<div class="mm" style="left:1128px;top:155px;width:2px"></div>
<div class="mm" style="left:1131px;top:155px;width:1px"></div>
<div class="mm" style="left:1133px;top:155px;width:4px"></div>
<div class="mm" style="left:1138px;top:155px;width:3px"></div>
<div class="mm" style="left:1099px;top:157px;width:3px"></div>
<div class="mm" style="left:1103px;top:157px;width:3px"></div>
<div class="mm" style="left:1095px;top:161px;width:5px"></div>
<div class="mm" style="left:1099px;top:163px;width:3px"></div>
<div class="mm" style="left:1103px;top:163px;width:3px"></div>
<div class="mm" style="left:1107px;top:163px;width:1px"></div>
<div class="mm" style="left:1115px;top:163px;width:1px"></div>
<div class="mm" style="left:1117px;top:163px;width:4px"></div>
<div class="mm" style="left:1095px;top:167px;width:1px"></div>
<div class="mm" style="left:1097px;top:167px;width:5px"></div>
<div class="mm" style="left:1103px;top:167px;width:1px"></div>
<div class="mm" style="left:1095px;top:169px;width:4px"></div>
<div class="mm" style="left:1099px;top:171px;width:3px"></div>
<div class="mm" style="left:1107px;top:171px;width:3px"></div>
<div class="mm" style="left:1099px;top:173px;width:3px"></div>
<div class="mm" style="left:1107px;top:173px;width:4px"></div>
<div class="mm" style="left:1112px;top:173px;width:1px"></div>
<div class="mm" style="left:1123px;top:173px;width:1px"></div>
<div class="mm" style="left:1125px;top:173px;width:3px"></div>
<div class="mm" style="left:1129px;top:173px;width:3px"></div>
<div class="mm" style="left:1133px;top:173px;width:4px"></div>
<div class="mm" style="left:1138px;top:173px;width:5px"></div>
<div class="mm" style="left:1144px;top:173px;width:4px"></div>
<div class="mm" style="left:1099px;top:175px;width:3px"></div>
<div class="mm" style="left:1103px;top:175px;width:8px"></div>
<div class="mm" style="left:1112px;top:175px;width:4px"></div>
<div class="mm" style="left:1118px;top:175px;width:3px"></div>
<div class="mm" style="left:1123px;top:175px;width:1px"></div>
<div class="mm" style="left:1125px;top:175px;width:7px"></div>
<div class="mm" style="left:1133px;top:175px;width:6px"></div>
<div class="mm" style="left:1140px;top:175px;width:4px"></div>
<div class="mm" style="left:1145px;top:175px;width:4px"></div>
<div class="mm" style="left:1150px;top:175px;width:4px"></div>
<div class="mm" style="left:1155px;top:175px;width:2px"></div>
<div class="mm" style="left:1158px;top:175px;width:5px"></div>
<div class="mm" style="left:1099px;top:177px;width:3px"></div>
<div class="mm" style="left:1107px;top:177px;width:4px"></div>
<div class="mm" style="left:1112px;top:177px;width:1px"></div>
<div class="mm" style="left:1115px;top:177px;width:1px"></div>
<div class="mm" style="left:1117px;top:177px;width:3px"></div>
<div class="mm" style="left:1121px;top:177px;width:5px"></div>
<div class="mm" style="left:1099px;top:179px;width:3px"></div>
<div class="mm" style="left:1103px;top:179px;width:5px"></div>
<div class="mm" style="left:1109px;top:179px;width:9px"></div>
<div class="mm" style="left:1119px;top:179px;width:1px"></div>
<div class="mm" style="left:1121px;top:179px;width:4px"></div>
<div class="mm" style="left:1126px;top:179px;width:5px"></div>
<div class="mm" style="left:1132px;top:179px;width:4px"></div>
<div class="mm" style="left:1137px;top:179px;width:2px"></div>
<div class="mm" style="left:1140px;top:179px;width:4px"></div>
<div class="mm" style="left:1095px;top:183px;width:1px"></div>
<div class="mm" style="left:1097px;top:183px;width:5px"></div>
<div class="mm" style="left:1103px;top:183px;width:1px"></div>
<div class="mm" style="left:1095px;top:185px;width:5px"></div>
<div class="mm" style="left:1099px;top:187px;width:1px"></div>
<div class="mm" style="left:1101px;top:187px;width:4px"></div>
<div class="mm" style="left:1106px;top:187px;width:6px"></div>
<div class="mm" style="left:1113px;top:187px;width:3px"></div>
<div class="mm" style="left:1117px;top:187px;width:1px"></div>
<div class="mm" style="left:1119px;top:187px;width:3px"></div>
<div class="mm" style="left:1123px;top:187px;width:3px"></div>
<div class="mm" style="left:1127px;top:187px;width:3px"></div>
<div class="mm" style="left:1131px;top:187px;width:1px"></div>
<div class="mm" style="left:1133px;top:187px;width:7px"></div>
<div class="mm" style="left:1099px;top:189px;width:1px"></div>
<div class="mm" style="left:1101px;top:189px;width:6px"></div>
<div class="mm" style="left:1108px;top:189px;width:4px"></div>
<div class="mm" style="left:1113px;top:189px;width:3px"></div>
<div class="mm" style="left:1117px;top:189px;width:5px"></div>
<div class="mm" style="left:1123px;top:189px;width:4px"></div>
<div class="mm" style="left:1128px;top:189px;width:4px"></div>
<div class="mm" style="left:1133px;top:189px;width:3px"></div>
<div class="mm" style="left:1137px;top:189px;width:1px"></div>
<div class="mm" style="left:1139px;top:189px;width:5px"></div>
<div class="mm" style="left:1099px;top:191px;width:3px"></div>
<div class="mm" style="left:1103px;top:191px;width:8px"></div>
<div class="mm" style="left:1112px;top:191px;width:1px"></div>
<div class="mm" style="left:1117px;top:191px;width:1px"></div>
<div class="mm" style="left:1119px;top:191px;width:3px"></div>
<div class="mm" style="left:1123px;top:191px;width:3px"></div>
<div class="mm" style="left:1099px;top:193px;width:3px"></div>
<div class="mm" style="left:1103px;top:193px;width:3px"></div>
<div class="mm" style="left:1099px;top:195px;width:3px"></div>
<div class="mm" style="left:1103px;top:195px;width:8px"></div>
<div class="mm" style="left:1112px;top:195px;width:4px"></div>
<div class="mm" style="left:1118px;top:195px;width:1px"></div>
<div class="mm" style="left:1120px;top:195px;width:7px"></div>
<div class="mm" style="left:1128px;top:195px;width:5px"></div>
<div class="mm" style="left:1134px;top:195px;width:7px"></div>
<div class="mm" style="left:1142px;top:195px;width:5px"></div>
<div class="mm" style="left:1148px;top:195px;width:2px"></div>
<div class="mm" style="left:1151px;top:195px;width:5px"></div>
<div class="mm" style="left:1157px;top:195px;width:2px"></div>
<div class="mm" style="left:1099px;top:197px;width:3px"></div>
<div class="mm" style="left:1103px;top:197px;width:3px"></div>
<div class="mm" style="left:1095px;top:199px;width:5px"></div>
<div class="mm" style="left:1095px;top:205px;width:1px"></div>
<div class="mm" style="left:1097px;top:205px;width:5px"></div>
<div class="mm" style="left:1103px;top:205px;width:1px"></div>
<div class="mm" style="left:1095px;top:209px;width:8px"></div>
<div class="mm" style="left:1104px;top:209px;width:19px"></div>
<div class="mm" style="left:1095px;top:213px;width:7px"></div>
<div class="mm" style="left:1103px;top:213px;width:8px"></div>
<div class="mm" style="left:1115px;top:213px;width:9px"></div>
<div class="mm" style="left:1095px;top:215px;width:7px"></div>
<div class="mm" style="left:1103px;top:215px;width:11px"></div>
<div class="mm" style="left:1117px;top:215px;width:5px"></div>
<div class="mm" style="left:1095px;top:219px;width:4px"></div>
<div class="mm" style="left:1100px;top:219px;width:26px"></div>
<div class="mm" style="left:1127px;top:219px;width:4px"></div>
<div class="mm" style="left:1132px;top:219px;width:4px"></div>
<div class="mm" style="left:1137px;top:219px;width:3px"></div>
<div class="mm" style="left:1141px;top:219px;width:4px"></div>
<div class="mm" style="left:1146px;top:219px;width:7px"></div>
<div class="mm" style="left:1154px;top:219px;width:4px"></div>
<div class="mm" style="left:1159px;top:219px;width:4px"></div>
<div class="mm" style="left:1164px;top:219px;width:4px"></div>
<div class="mm" style="left:1098px;top:223px;width:2px"></div>
<div class="mm" style="left:1101px;top:223px;width:4px"></div>
<div class="mm" style="left:1106px;top:223px;width:2px"></div>
<div class="mm" style="left:1098px;top:225px;width:16px"></div>
<div class="mm" style="left:1098px;top:227px;width:16px"></div>
<div class="mm" style="left:1098px;top:231px;width:2px"></div>
<div class="mm" style="left:1101px;top:231px;width:3px"></div>
<div class="mm" style="left:1105px;top:231px;width:1px"></div>
<div class="mm" style="left:1107px;top:231px;width:3px"></div>
<div class="mm" style="left:1098px;top:233px;width:18px"></div>
<div class="mm" style="left:1117px;top:233px;width:5px"></div>
<div class="mm" style="left:1098px;top:235px;width:18px"></div>
<div class="mm" style="left:1117px;top:235px;width:5px"></div>
<div class="mm" style="left:1098px;top:237px;width:33px"></div>
<div class="mm" style="left:1132px;top:237px;width:3px"></div>
<div class="mm" style="left:1136px;top:237px;width:2px"></div>
<div class="mm" style="left:1139px;top:237px;width:21px"></div>
<div class="mm" style="left:1161px;top:237px;width:2px"></div>
<div class="mm" style="left:1164px;top:237px;width:4px"></div>
<div class="mm" style="left:1098px;top:239px;width:30px"></div>
<div class="mm" style="left:1129px;top:239px;width:3px"></div>
<div class="mm" style="left:1133px;top:239px;width:2px"></div>
<div class="mm" style="left:1136px;top:239px;width:21px"></div>
<div class="mm" style="left:1158px;top:239px;width:2px"></div>
<div class="mm" style="left:1161px;top:239px;width:4px"></div>
<div class="mm" style="left:1098px;top:243px;width:13px"></div>
<div class="mm" style="left:1112px;top:243px;width:1px"></div>
<div class="mm" style="left:1114px;top:243px;width:1px"></div>
<div class="mm" style="left:1116px;top:243px;width:45px"></div>
<div class="mm" style="left:1098px;top:247px;width:2px"></div>
<div class="mm" style="left:1101px;top:247px;width:3px"></div>
<div class="mm" style="left:1105px;top:247px;width:1px"></div>
<div class="mm" style="left:1107px;top:247px;width:3px"></div>
<div class="mm" style="left:1111px;top:247px;width:1px"></div>
<div class="mm" style="left:1113px;top:247px;width:3px"></div>
<div class="mm" style="left:1117px;top:247px;width:1px"></div>
<div class="mm" style="left:1119px;top:247px;width:3px"></div>
<div class="mm" style="left:1098px;top:249px;width:26px"></div>
<div class="mm" style="left:1125px;top:249px;width:4px"></div>
<div class="mm" style="left:1130px;top:249px;width:3px"></div>
<div class="mm" style="left:1098px;top:251px;width:26px"></div>
<div class="mm" style="left:1125px;top:251px;width:4px"></div>
<div class="mm" style="left:1130px;top:251px;width:3px"></div>
<div class="mm" style="left:1098px;top:253px;width:25px"></div>
<div class="mm" style="left:1124px;top:253px;width:4px"></div>
<div class="mm" style="left:1129px;top:253px;width:3px"></div>
<div class="mm" style="left:1098px;top:255px;width:25px"></div>
<div class="mm" style="left:1124px;top:255px;width:5px"></div>
<div class="mm" style="left:1098px;top:257px;width:30px"></div>
<div class="mm" style="left:1129px;top:257px;width:5px"></div>
<div class="mm" style="left:1098px;top:261px;width:2px"></div>
<div class="mm" style="left:1101px;top:261px;width:6px"></div>
<div class="mm" style="left:1108px;top:261px;width:1px"></div>
<div class="mm" style="left:1110px;top:261px;width:3px"></div>
<div class="mm" style="left:1098px;top:263px;width:33px"></div>
<div class="mm" style="left:1132px;top:263px;width:2px"></div>
<div class="mm" style="left:1135px;top:263px;width:3px"></div>
<div class="mm" style="left:1098px;top:267px;width:2px"></div>
<div class="mm" style="left:1101px;top:267px;width:3px"></div>
<div class="mm" style="left:1105px;top:267px;width:1px"></div>
<div class="mm" style="left:1107px;top:267px;width:5px"></div>
<div class="mm" style="left:1113px;top:267px;width:4px"></div>
<div class="mm" style="left:1098px;top:269px;width:27px"></div>
<div class="mm" style="left:1126px;top:269px;width:5px"></div>
<div class="mm" style="left:1132px;top:269px;width:6px"></div>
<div class="mm" style="left:1139px;top:269px;width:3px"></div>
<div class="mm" style="left:1098px;top:273px;width:2px"></div>
<div class="mm" style="left:1101px;top:273px;width:2px"></div>
<div class="mm" style="left:1104px;top:273px;width:5px"></div>
<div class="mm" style="left:1110px;top:273px;width:1px"></div>
<div class="mm" style="left:1112px;top:273px;width:4px"></div>
<div class="mm" style="left:1098px;top:275px;width:5px"></div>
<div class="mm" style="left:1104px;top:275px;width:3px"></div>
<div class="mm" style="left:1108px;top:275px;width:1px"></div>
<div class="mm" style="left:1110px;top:275px;width:21px"></div>
<div class="mm" style="left:1132px;top:275px;width:1px"></div>
<div class="mm" style="left:1134px;top:275px;width:9px"></div>
<div class="mm" style="left:1098px;top:277px;width:24px"></div>
<div class="mm" style="left:1123px;top:277px;width:5px"></div>
<div class="mm" style="left:1098px;top:281px;width:2px"></div>
<div class="mm" style="left:1101px;top:281px;width:2px"></div>
<div class="mm" style="left:1104px;top:281px;width:4px"></div>
<div class="mm" style="left:1109px;top:281px;width:3px"></div>
<div class="mm" style="left:1098px;top:283px;width:27px"></div>
<div class="mm" style="left:1126px;top:283px;width:18px"></div>
<div class="mm" style="left:1098px;top:287px;width:16px"></div>
<div class="mm" style="left:1115px;top:287px;width:3px"></div>
<div class="mm" style="left:1119px;top:287px;width:7px"></div>
<div class="mm" style="left:1127px;top:287px;width:4px"></div>
<div class="mm" style="left:1095px;top:289px;width:1px"></div>
<div class="mm" style="left:1095px;top:291px;width:2px"></div>
<div class="a" style="left:1169px;top:92px;width:1px;height:444px;background:#0c0c0c"></div>
<div class="a" style="left:1170px;top:243px;width:12px;height:2px;background:#7a7a7a"></div>
<div class="hl" style="left:348px;top:536px;width:834px"></div>
<div class="t" style="left:368px;top:547px;font-size:11px;color:#e7e7e7;line-height:16px;"><i style="width:7.8px;height:16px"><svg style="left:-0.75px;top:3.35px" width="9.3" height="9.3" viewBox="0 0 10 10"><path d="M4 0.5c-.5 2-2 3.5-3.5 4.5M3.5 2h5c-.5 4-3 6.5-6 7.5M3 4.5l4 2.5" stroke="#e7e7e7" stroke-width="1.18" fill="none" stroke-linecap="round" stroke-linejoin="round"/></svg></i><i style="width:7.8px;height:16px"><svg style="left:-0.75px;top:3.35px" width="9.3" height="9.3" viewBox="0 0 10 10"><path d="M0.5 5h9" stroke="#e7e7e7" stroke-width="1.18" fill="none" stroke-linecap="round" stroke-linejoin="round"/></svg></i><i style="width:7.8px;height:16px"><svg style="left:-0.75px;top:3.35px" width="9.3" height="9.3" viewBox="0 0 10 10"><path d="M2 1.5l5 1M2 4.5l5 1M1.5 7.5l6.5 2" stroke="#e7e7e7" stroke-width="1.18" fill="none" stroke-linecap="round" stroke-linejoin="round"/></svg></i><i style="width:7.8px;height:16px"><svg style="left:-0.75px;top:3.35px" width="9.3" height="9.3" viewBox="0 0 10 10"><path d="M1 3.5h8M5.5 0.5v3c0 3-1.5 5-3.5 6.5" stroke="#e7e7e7" stroke-width="1.18" fill="none" stroke-linecap="round" stroke-linejoin="round"/></svg></i><i style="width:7.8px;height:16px"><svg style="left:-0.75px;top:3.35px" width="9.3" height="9.3" viewBox="0 0 10 10"><path d="M3 1.5v3c0 2-1 4-2.5 5.5M6 1v8c1.5-.5 2.5-1.5 3.5-3" stroke="#e7e7e7" stroke-width="1.18" fill="none" stroke-linecap="round" stroke-linejoin="round"/></svg></i></div>
<div class="a" style="left:366px;top:565px;width:44px;height:1px;background:#3794ff"></div>
<div class="t" style="left:432px;top:547px;font-size:11px;color:#9d9d9d;line-height:16px;"><i style="width:10.5px;height:16px"><svg style="left:0.60px;top:3.35px" width="9.3" height="9.3" viewBox="0 0 10 10"><path d="M1 .5v9.5M1 1h3.5v3H1M9 .5v9.5H8M9 1H5.5v3H9M3 5.5h4v3.5H3z" stroke="#9d9d9d" stroke-width="1.18" fill="none" stroke-linecap="round" stroke-linejoin="round"/></svg></i><i style="width:10.5px;height:16px"><svg style="left:0.60px;top:3.35px" width="9.3" height="9.3" viewBox="0 0 10 10"><path d="M1 .5h3V4H1zM1 2.3h3M.5 5H5M2.5 5v3.5M1 6.5v2M.5 9.5c2.5.5 6 .5 9 .5M5.5.8h4M6 2.3h3v5H6zM6 4h3M6 5.6h3M6.5 7.5 5.5 9M8.5 7.5 9.5 9" stroke="#9d9d9d" stroke-width="1.18" fill="none" stroke-linecap="round" stroke-linejoin="round"/></svg></i></div>
<div class="t" style="left:478px;top:547px;font-size:11px;color:#9d9d9d;line-height:16px;"><i style="width:10.5px;height:16px"><svg style="left:0.60px;top:3.35px" width="9.3" height="9.3" viewBox="0 0 10 10"><path d="M5 0.5v9M2 2v3.5h6V2M1.5 6v3.5h7V6" stroke="#9d9d9d" stroke-width="1.18" fill="none" stroke-linecap="round" stroke-linejoin="round"/></svg></i><i style="width:10.5px;height:16px"><svg style="left:0.60px;top:3.35px" width="9.3" height="9.3" viewBox="0 0 10 10"><path d="M1 2.5h7.5c0 4-.5 7-2.5 7M4.5 .5c0 4.5-1 7-4 9.5" stroke="#9d9d9d" stroke-width="1.18" fill="none" stroke-linecap="round" stroke-linejoin="round"/></svg></i></div>
<div class="t" style="left:524px;top:547px;font-size:11px;color:#9d9d9d;line-height:16px;"><i style="width:7.9px;height:16px"><svg style="left:-0.70px;top:3.35px" width="9.3" height="9.3" viewBox="0 0 10 10"><path d="M2 1h6M1 3.5h8M5 3.5c0 3-1 5-3 6M8.2 0.3l.7 1.4M9.5 0l.7 1.4" stroke="#9d9d9d" stroke-width="1.18" fill="none" stroke-linecap="round" stroke-linejoin="round"/></svg></i><i style="width:7.9px;height:16px"><svg style="left:-0.70px;top:3.35px" width="9.3" height="9.3" viewBox="0 0 10 10"><path d="M3.5 3c-.5 2.5-1.5 4.5-3 6M6 3c1.5 2 2.5 4 3 6.5M8.2 0.3l.7 1.4M9.5 0l.7 1.4" stroke="#9d9d9d" stroke-width="1.18" fill="none" stroke-linecap="round" stroke-linejoin="round"/></svg></i><i style="width:7.9px;height:16px"><svg style="left:-0.70px;top:3.35px" width="9.3" height="9.3" viewBox="0 0 10 10"><path transform="translate(1.5 3) scale(0.7)" d="M1.5 2l1 2M4 1.5l1 2M8.5 1.5c-.5 4-2.5 6.5-5.5 8" stroke="#9d9d9d" stroke-width="1.69" fill="none"/></svg></i><i style="width:7.9px;height:16px"><svg style="left:-0.70px;top:3.35px" width="9.3" height="9.3" viewBox="0 0 10 10"><path d="M4 0.5c-.5 2-2 3.5-3.5 4.5M3.5 2h5c-.5 4-3 6.5-6 7.5M8.2 0.3l.7 1.4M9.5 0l.7 1.4" stroke="#9d9d9d" stroke-width="1.18" fill="none" stroke-linecap="round" stroke-linejoin="round"/></svg></i> <i style="width:7.9px;height:16px"><svg style="left:-0.70px;top:3.35px" width="9.3" height="9.3" viewBox="0 0 10 10"><path d="M1.5 2h7v7h-7" stroke="#9d9d9d" stroke-width="1.18" fill="none" stroke-linecap="round" stroke-linejoin="round"/></svg></i><i style="width:7.9px;height:16px"><svg style="left:-0.70px;top:3.35px" width="9.3" height="9.3" viewBox="0 0 10 10"><path d="M1.5 2l2 1.5M1.5 9.5c3-1 6-3.5 7.5-7" stroke="#9d9d9d" stroke-width="1.18" fill="none" stroke-linecap="round" stroke-linejoin="round"/></svg></i><i style="width:7.9px;height:16px"><svg style="left:-0.70px;top:3.35px" width="9.3" height="9.3" viewBox="0 0 10 10"><path d="M1.5 2l1.5 3M8.5 1.5c-.5 4-2.5 6.5-5.5 8" stroke="#9d9d9d" stroke-width="1.18" fill="none" stroke-linecap="round" stroke-linejoin="round"/></svg></i><i style="width:7.9px;height:16px"><svg style="left:-0.70px;top:3.35px" width="9.3" height="9.3" viewBox="0 0 10 10"><path d="M0.5 5h9" stroke="#9d9d9d" stroke-width="1.18" fill="none" stroke-linecap="round" stroke-linejoin="round"/></svg></i><i style="width:7.9px;height:16px"><svg style="left:-0.70px;top:3.35px" width="9.3" height="9.3" viewBox="0 0 10 10"><path d="M3 1.5v3c0 2-1 4-2.5 5.5M6 1v8c1.5-.5 2.5-1.5 3.5-3" stroke="#9d9d9d" stroke-width="1.18" fill="none" stroke-linecap="round" stroke-linejoin="round"/></svg></i></div>
<div class="t" style="left:623px;top:547px;font-size:11px;color:#9d9d9d;line-height:16px;"><i style="width:8.1px;height:16px"><svg style="left:-0.60px;top:3.35px" width="9.3" height="9.3" viewBox="0 0 10 10"><path d="M1 3.5h8M5 1v8.5M2.5 5.5l-1.5 2.5M7.5 5.5l1.5 2.5M9.2 1.3m-1 0a1 1 0 1 0 2 0a1 1 0 1 0-2 0" stroke="#9d9d9d" stroke-width="1.18" fill="none" stroke-linecap="round" stroke-linejoin="round"/></svg></i><i style="width:8.1px;height:16px"><svg style="left:-0.60px;top:3.35px" width="9.3" height="9.3" viewBox="0 0 10 10"><path d="M0.5 5h9" stroke="#9d9d9d" stroke-width="1.18" fill="none" stroke-linecap="round" stroke-linejoin="round"/></svg></i><i style="width:8.1px;height:16px"><svg style="left:-0.60px;top:3.35px" width="9.3" height="9.3" viewBox="0 0 10 10"><path d="M3.5 0.5v9.5M3.5 4l4.5 2" stroke="#9d9d9d" stroke-width="1.18" fill="none" stroke-linecap="round" stroke-linejoin="round"/></svg></i></div>
<div class="a" style="left:652px;top:547px;width:15px;height:15px;border-radius:8px;background:#0078d4"></div>
<div class="t" style="left:652px;top:547px;font-size:10px;color:#ffffff;line-height:16px;width:15px;text-align:center;line-height:15px;">8</div>
<div class="t" style="left:690px;top:547px;font-size:11px;color:#9d9d9d;line-height:16px;letter-spacing:-0.5px;">MEMORY</div>
<div class="t" style="left:759px;top:547px;font-size:11px;color:#9d9d9d;line-height:16px;letter-spacing:-0.6px;">XRTOS</div>
<div class="t" style="left:816px;top:547px;font-size:11px;color:#9d9d9d;line-height:16px;"><i style="width:7.9px;height:16px"><svg style="left:-0.70px;top:3.35px" width="9.3" height="9.3" viewBox="0 0 10 10"><path d="M1.5 1.5l2 1M1 4l2 1M2 9.5c3-1 5.5-3.5 7-7.5" stroke="#9d9d9d" stroke-width="1.18" fill="none" stroke-linecap="round" stroke-linejoin="round"/></svg></i><i style="width:7.9px;height:16px"><svg style="left:-0.70px;top:3.35px" width="9.3" height="9.3" viewBox="0 0 10 10"><path d="M2.5 1.5v4.5M7.5 1v4c0 2.5-1.5 4-4 5" stroke="#9d9d9d" stroke-width="1.18" fill="none" stroke-linecap="round" stroke-linejoin="round"/></svg></i><i style="width:7.9px;height:16px"><svg style="left:-0.70px;top:3.35px" width="9.3" height="9.3" viewBox="0 0 10 10"><path d="M1.5 1.5h7.5c-.5 1.5-1.5 2.5-2.5 3.2M5 3.5c0 3-1 5-3.5 6" stroke="#9d9d9d" stroke-width="1.18" fill="none" stroke-linecap="round" stroke-linejoin="round"/></svg></i><i style="width:7.9px;height:16px"><svg style="left:-0.70px;top:3.35px" width="9.3" height="9.3" viewBox="0 0 10 10"><path d="M3 1.5v3c0 2-1 4-2.5 5.5M6 1v8c1.5-.5 2.5-1.5 3.5-3" stroke="#9d9d9d" stroke-width="1.18" fill="none" stroke-linecap="round" stroke-linejoin="round"/></svg></i> <i style="width:7.9px;height:16px"><svg style="left:-0.70px;top:3.35px" width="9.3" height="9.3" viewBox="0 0 10 10"><path d="M1.5 1.5h7M1 4.5h8M4.5 1.5v6c0 1.5.5 2 2 2h2.5" stroke="#9d9d9d" stroke-width="1.18" fill="none" stroke-linecap="round" stroke-linejoin="round"/></svg></i><i style="width:7.9px;height:16px"><svg style="left:-0.70px;top:3.35px" width="9.3" height="9.3" viewBox="0 0 10 10"><path d="M2 2.5h6M1 8.5h8" stroke="#9d9d9d" stroke-width="1.18" fill="none" stroke-linecap="round" stroke-linejoin="round"/></svg></i><i style="width:7.9px;height:16px"><svg style="left:-0.70px;top:3.35px" width="9.3" height="9.3" viewBox="0 0 10 10"><path d="M4 0.5c-.5 2-2 3.5-3.5 4.5M3.5 2h5c-.5 4-3 6.5-6 7.5M3 4.5l4 2.5" stroke="#9d9d9d" stroke-width="1.18" fill="none" stroke-linecap="round" stroke-linejoin="round"/></svg></i><i style="width:7.9px;height:16px"><svg style="left:-0.70px;top:3.35px" width="9.3" height="9.3" viewBox="0 0 10 10"><path d="M0.5 5h9" stroke="#9d9d9d" stroke-width="1.18" fill="none" stroke-linecap="round" stroke-linejoin="round"/></svg></i></div>
<svg style="left:1049px;top:548px" width="14" height="14" viewBox="0 0 14 14"><path d="M7 0v14M0 7h14" stroke="#cccccc" stroke-width="1.2"/></svg>
<svg style="left:1068px;top:552px" width="9" height="6" viewBox="0 0 9 6"><path d="M0.5 0.8 4.5 4.8 8.5 0.8" stroke="#cccccc" stroke-width="1.1" fill="none"/></svg>
<svg style="left:1089px;top:553px" width="12" height="3"><circle cx="1.5" cy="1.5" r="1.1" fill="#ccc"/><circle cx="6" cy="1.5" r="1.1" fill="#ccc"/><circle cx="10.5" cy="1.5" r="1.1" fill="#ccc"/></svg>
<div class="a" style="left:1114px;top:547px;width:1px;height:16px;background:#5a5a5a"></div>
<svg style="left:1128px;top:548px" width="13" height="13" viewBox="0 0 13 13"><path d="M0.6 4V0.6H4M9 0.6h3.4V4M12.4 9v3.4H9M4 12.4H0.6V9" stroke="#cccccc" stroke-width="1.2" fill="none"/></svg>
<svg style="left:1155px;top:549px" width="10" height="10" viewBox="0 0 10 10"><path d="M0.5 0.5 9.5 9.5M9.5 0.5 0.5 9.5" stroke="#cccccc" stroke-width="1.2"/></svg>
<div class="a" style="left:962px;top:572px;width:1px;height:192px;background:#050505"></div>
<div class="a" style="left:962px;top:572px;width:15px;height:1px;background:#050505"></div>
<div class="a" style="left:963px;top:572px;width:4px;height:3px;background:#2a8fc0"></div>
<div class="vl" style="left:977px;top:572px;height:192px"></div>
<div class="a" style="left:355px;top:576px;width:8px;height:8px;border-radius:4px;background:#3794c4"></div>
<div class="a" style="left:368px;top:572px;width:21px;height:16px;background:#c8c8c8"></div>
<svg style="left:375px;top:576px" width="7" height="8" viewBox="0 0 7 8"><path d="M3.5 0.5v7M0.5 2.2l6 3.6M6.5 2.2l-6 3.6" stroke="#222" stroke-width="1.1"/></svg>
<div class="term" style="top:574px">    <i style="width:14px;height:16px"><svg style="left:1.25px;top:0.25px" width="11.5" height="11.5" viewBox="0 0 10 10"><path d="M5 .5v1M1 3V1.5h8V3M2.5 3.5h5M2.5 5h5M1 6.8h8M5 3.5c0 3-2 5-4.5 6M5 6.8c1 1.5 2.5 2.5 4.5 3" stroke="#cccccc" stroke-width="1.09" fill="none" stroke-linecap="round" stroke-linejoin="round"/></svg></i><i style="width:14px;height:16px"><svg style="left:1.25px;top:0.25px" width="11.5" height="11.5" viewBox="0 0 10 10"><path d="M3 .5C2.5 1.5 1.5 2.5.5 3M3 3.5C2.5 5 1.5 6 .5 7M2 5v5M5 1.5h4.5M4.5 4.5h5M7.5 4.5v5c0 .5-.5.5-1.5.5" stroke="#cccccc" stroke-width="1.09" fill="none" stroke-linecap="round" stroke-linejoin="round"/></svg></i><i style="width:14px;height:16px"><svg style="left:1.25px;top:0.25px" width="11.5" height="11.5" viewBox="0 0 10 10"><path d="M1 3h8M5.5 0.5v6.5c0 1-1 1.5-2 1s-1-2 0-2.5 2 .5 2 1.5-.5 2-2.5 3.5" stroke="#cccccc" stroke-width="1.09" fill="none" stroke-linecap="round" stroke-linejoin="round"/></svg></i><i style="width:14px;height:16px"><svg style="left:1.25px;top:0.25px" width="11.5" height="11.5" viewBox="0 0 10 10"><path d="M2 1h5L2 6c2-1.5 6-1.5 6 1.5 0 2-3 2.5-4 1.5s0-1.5 1.5-.5" stroke="#cccccc" stroke-width="1.09" fill="none" stroke-linecap="round" stroke-linejoin="round"/></svg></i><i style="width:14px;height:16px"><svg style="left:1.25px;top:0.25px" width="11.5" height="11.5" viewBox="0 0 10 10"><path d="M4 0.5c-.5 2-2 3.5-3.5 4.5M3.5 2h5c-.5 4-3 6.5-6 7.5M3 4.5l4 2.5" stroke="#cccccc" stroke-width="1.09" fill="none" stroke-linecap="round" stroke-linejoin="round"/></svg></i><i style="width:14px;height:16px"><svg style="left:1.25px;top:0.25px" width="11.5" height="11.5" viewBox="0 0 10 10"><path d="M2 1.5h6c-1 3.5-3.5 6-7 8M5.5 6.5l3.5 3" stroke="#cccccc" stroke-width="1.09" fill="none" stroke-linecap="round" stroke-linejoin="round"/></svg></i><i style="width:14px;height:16px"><svg style="left:1.25px;top:0.25px" width="11.5" height="11.5" viewBox="0 0 10 10"><path d="M4 0.5c-.5 2-2 3.5-3.5 4.5M3.5 2h5c-.5 4-3 6.5-6 7.5" stroke="#cccccc" stroke-width="1.09" fill="none" stroke-linecap="round" stroke-linejoin="round"/></svg></i>: /home/yoneda/.pico-sdk/ninja/v1.12.1/ninja -C /home/yoneda/Pico_</div>
<div class="term" style="top:590px">Projects/TM1637_pio/build</div>
<div class="term" style="top:622px">ninja: Entering directory `/home/yoneda/Pico_Projects/TM1637_pio/build&#x27;</div>
<div class="term" style="top:638px">ninja: no work to do.</div>
<div class="a" style="left:368px;top:652px;width:21px;height:16px;background:#c8c8c8"></div>
<svg style="left:375px;top:656px" width="7" height="8" viewBox="0 0 7 8"><path d="M3.5 0.5v7M0.5 2.2l6 3.6M6.5 2.2l-6 3.6" stroke="#222" stroke-width="1.1"/></svg>
<div class="term" style="top:654px">    <i style="width:14px;height:16px"><svg style="left:1.25px;top:0.25px" width="11.5" height="11.5" viewBox="0 0 10 10"><path d="M4 0.5c-.5 2-2 3.5-3.5 4.5M3.5 2h5c-.5 4-3 6.5-6 7.5M3 4.5l4 2.5" stroke="#cccccc" stroke-width="1.09" fill="none" stroke-linecap="round" stroke-linejoin="round"/></svg></i><i style="width:14px;height:16px"><svg style="left:1.25px;top:0.25px" width="11.5" height="11.5" viewBox="0 0 10 10"><path d="M0.5 5h9" stroke="#cccccc" stroke-width="1.09" fill="none" stroke-linecap="round" stroke-linejoin="round"/></svg></i><i style="width:14px;height:16px"><svg style="left:1.25px;top:0.25px" width="11.5" height="11.5" viewBox="0 0 10 10"><path d="M2 1.5l5 1M2 4.5l5 1M1.5 7.5l6.5 2" stroke="#cccccc" stroke-width="1.09" fill="none" stroke-linecap="round" stroke-linejoin="round"/></svg></i><i style="width:14px;height:16px"><svg style="left:1.25px;top:0.25px" width="11.5" height="11.5" viewBox="0 0 10 10"><path d="M1 3.5h8M5.5 0.5v3c0 3-1.5 5-3.5 6.5" stroke="#cccccc" stroke-width="1.09" fill="none" stroke-linecap="round" stroke-linejoin="round"/></svg></i><i style="width:14px;height:16px"><svg style="left:1.25px;top:0.25px" width="11.5" height="11.5" viewBox="0 0 10 10"><path d="M3 1.5v3c0 2-1 4-2.5 5.5M6 1v8c1.5-.5 2.5-1.5 3.5-3" stroke="#cccccc" stroke-width="1.09" fill="none" stroke-linecap="round" stroke-linejoin="round"/></svg></i><i style="width:14px;height:16px"><svg style="left:1.25px;top:0.25px" width="11.5" height="11.5" viewBox="0 0 10 10"><path d="M2 1c-.5 3-.5 6 .5 8.5M4.5 3h4.5M6.5 0.5v7.5c0 1-1 1.5-2 1.5s-1.5-1 0-1.5 3 0 4.5 1.5" stroke="#cccccc" stroke-width="1.09" fill="none" stroke-linecap="round" stroke-linejoin="round"/></svg></i><i style="width:14px;height:16px"><svg style="left:1.25px;top:0.25px" width="11.5" height="11.5" viewBox="0 0 10 10"><path d="M4 0.5c-.5 2-2 3.5-3.5 4.5M3.5 2h5c-.5 4-3 6.5-6 7.5M3 4.5l4 2.5" stroke="#cccccc" stroke-width="1.09" fill="none" stroke-linecap="round" stroke-linejoin="round"/></svg></i><i style="width:14px;height:16px"><svg style="left:1.25px;top:0.25px" width="11.5" height="11.5" viewBox="0 0 10 10"><path d="M2 1.5h6c-1 3.5-3.5 6-7 8M5.5 6.5l3.5 3" stroke="#cccccc" stroke-width="1.09" fill="none" stroke-linecap="round" stroke-linejoin="round"/></svg></i><i style="width:14px;height:16px"><svg style="left:1.25px;top:0.25px" width="11.5" height="11.5" viewBox="0 0 10 10"><path d="M4 0.5c-.5 2-2 3.5-3.5 4.5M3.5 2h5c-.5 4-3 6.5-6 7.5" stroke="#cccccc" stroke-width="1.09" fill="none" stroke-linecap="round" stroke-linejoin="round"/></svg></i><i style="width:14px;height:16px"><svg style="left:1.25px;top:0.25px" width="11.5" height="11.5" viewBox="0 0 10 10"><path d="M1 2.5c2.5 0 5-.5 8-1.5-3 1-5 3-5 5s1.5 3 4 3M8.2 0.3l.7 1.4M9.5 0l.7 1.4" stroke="#cccccc" stroke-width="1.09" fill="none" stroke-linecap="round" stroke-linejoin="round"/></svg></i><i style="width:14px;height:16px"><svg style="left:1.25px;top:0.25px" width="11.5" height="11.5" viewBox="0 0 10 10"><path d="M1 1h8M.5 5h9M2 2.8h6v6.5M2 2.8v7M2 7h6M5 1v8" stroke="#cccccc" stroke-width="1.09" fill="none" stroke-linecap="round" stroke-linejoin="round"/></svg></i><i style="width:14px;height:16px"><svg style="left:1.25px;top:0.25px" width="11.5" height="11.5" viewBox="0 0 10 10"><path d="M5 .5c-1.5.8-3 1-4.5 1M.5 3.5h5M3 1.5v8.5M3 4c-.5 2-1.5 3.5-2.5 4.5M3 4.5l2.5 2M7 2v5M9 .5v9.5" stroke="#cccccc" stroke-width="1.09" fill="none" stroke-linecap="round" stroke-linejoin="round"/></svg></i><i style="width:14px;height:16px"><svg style="left:1.25px;top:0.25px" width="11.5" height="11.5" viewBox="0 0 10 10"><path d="M2 1h7v8.5H8M2 1v5c0 2-.5 3-1.5 4M2 4h7M2 6.5h7M5.5 1v8.5" stroke="#cccccc" stroke-width="1.09" fill="none" stroke-linecap="round" stroke-linejoin="round"/></svg></i><i style="width:14px;height:16px"><svg style="left:1.25px;top:0.25px" width="11.5" height="11.5" viewBox="0 0 10 10"><path d="M1.5 3.5h7M4 1l3.5 6M2.5 7.5c.5 1.5 2 2 5 2" stroke="#cccccc" stroke-width="1.09" fill="none" stroke-linecap="round" stroke-linejoin="round"/></svg></i><i style="width:14px;height:16px"><svg style="left:1.25px;top:0.25px" width="11.5" height="11.5" viewBox="0 0 10 10"><path d="M3 0.5v9.5M0.5 3.5h2.5L0.5 7.5M3 5c1.5-1.5 3-2 3-.5v4c0 1 .5 1 3.5-1" stroke="#cccccc" stroke-width="1.09" fill="none" stroke-linecap="round" stroke-linejoin="round"/></svg></i><i style="width:14px;height:16px"><svg style="left:1.25px;top:0.25px" width="11.5" height="11.5" viewBox="0 0 10 10"><path d="M1.5 2.5h7M1.5 5h7M5 0.5v7.5c0 1-1 1.5-2 1.5s-1.5-1 0-1.5 3 0 4.5 1.5" stroke="#cccccc" stroke-width="1.09" fill="none" stroke-linecap="round" stroke-linejoin="round"/></svg></i><i style="width:14px;height:16px"><svg style="left:1.25px;top:0.25px" width="11.5" height="11.5" viewBox="0 0 10 10"><path d="M1 3h8M5.5 0.5v6.5c0 1-1 1.5-2 1s-1-2 0-2.5 2 .5 2 1.5-.5 2-2.5 3.5" stroke="#cccccc" stroke-width="1.09" fill="none" stroke-linecap="round" stroke-linejoin="round"/></svg></i><i style="width:14px;height:16px"><svg style="left:1.25px;top:0.25px" width="11.5" height="11.5" viewBox="0 0 10 10"><path d="M1.5 7.5l1.5 1.5" stroke="#cccccc" stroke-width="1.09" fill="none" stroke-linecap="round" stroke-linejoin="round"/></svg></i><i style="width:14px;height:16px"><svg style="left:1.25px;top:0.25px" width="11.5" height="11.5" viewBox="0 0 10 10"><path d="M1 .5v9.5M1 1h3v2.5H1M9 .5v9.5H8M9 1H6v2.5h3M3 6h4M5.5 4.5v4.5M5.5 6c-.5 1.5-1.5 2.5-2.5 3" stroke="#cccccc" stroke-width="1.09" fill="none" stroke-linecap="round" stroke-linejoin="round"/></svg></i><i style="width:14px;height:16px"><svg style="left:1.25px;top:0.25px" width="11.5" height="11.5" viewBox="0 0 10 10"><path d="M3 1v6c0 2.5 2 3 5.5 1M8.2 0.3l.7 1.4M9.5 0l.7 1.4" stroke="#cccccc" stroke-width="1.09" fill="none" stroke-linecap="round" stroke-linejoin="round"/></svg></i><i style="width:14px;height:16px"><svg style="left:1.25px;top:0.25px" width="11.5" height="11.5" viewBox="0 0 10 10"><path d="M2 1h5L2 6c2-1.5 6-1.5 6 1.5 0 2-3 2.5-4 1.5s0-1.5 1.5-.5" stroke="#cccccc" stroke-width="1.09" fill="none" stroke-linecap="round" stroke-linejoin="round"/></svg></i><i style="width:14px;height:16px"><svg style="left:1.25px;top:0.25px" width="11.5" height="11.5" viewBox="0 0 10 10"><path d="M2 1c-.5 3-.5 6 .5 8.5M4.5 2h4M4.5 8c.5 1.5 2 1.5 4.5 1.5" stroke="#cccccc" stroke-width="1.09" fill="none" stroke-linecap="round" stroke-linejoin="round"/></svg></i><i style="width:14px;height:16px"><svg style="left:1.25px;top:0.25px" width="11.5" height="11.5" viewBox="0 0 10 10"><path d="M2 1c-.5 3-.5 6 .5 8.5M4.5 3h4.5M6.5 0.5v7.5c0 1-1 1.5-2 1.5s-1.5-1 0-1.5 3 0 4.5 1.5" stroke="#cccccc" stroke-width="1.09" fill="none" stroke-linecap="round" stroke-linejoin="round"/></svg></i><i style="width:14px;height:16px"><svg style="left:1.25px;top:0.25px" width="11.5" height="11.5" viewBox="0 0 10 10"><path d="M3 0.5C2.5 2.5 1.5 4 .5 5M2 3.5v6.5M4.5 2c1.5 0 3 0 4.5-1M6.5 1.5v7.5M4 5h5M4 9h5.5" stroke="#cccccc" stroke-width="1.09" fill="none" stroke-linecap="round" stroke-linejoin="round"/></svg></i><i style="width:14px;height:16px"><svg style="left:1.25px;top:0.25px" width="11.5" height="11.5" viewBox="0 0 10 10"><path d="M5 .5v1M1.5 1.8h7M3 2.5l.5 1M7 2.5l-.5 1M1 3.8h8M2.5 4.8h5v2.5h-5zM2.5 6h5M1.5 8 .5 9.5M3.5 8v1.5h4L7 8.5M9 8l.5 1.5" stroke="#cccccc" stroke-width="1.09" fill="none" stroke-linecap="round" stroke-linejoin="round"/></svg></i><i style="width:14px;height:16px"><svg style="left:1.25px;top:0.25px" width="11.5" height="11.5" viewBox="0 0 10 10"><path d="M5 2c-1.5 3-2 6-3 7.5-1.5-1-1.5-4 .5-6s5-2 6 0 0 6-3.5 6.5" stroke="#cccccc" stroke-width="1.09" fill="none" stroke-linecap="round" stroke-linejoin="round"/></svg></i><i style="width:14px;height:16px"><svg style="left:1.25px;top:0.25px" width="11.5" height="11.5" viewBox="0 0 10 10"><path d="M1.5 3.5h7M1 6.5h8M4.5 1l1.5 9" stroke="#cccccc" stroke-width="1.09" fill="none" stroke-linecap="round" stroke-linejoin="round"/></svg></i><i style="width:14px;height:16px"><svg style="left:1.25px;top:0.25px" width="11.5" height="11.5" viewBox="0 0 10 10"><path d="M0.5 5h9" stroke="#cccccc" stroke-width="1.09" fill="none" stroke-linecap="round" stroke-linejoin="round"/></svg></i><i style="width:14px;height:16px"><svg style="left:1.25px;top:0.25px" width="11.5" height="11.5" viewBox="0 0 10 10"><path d="M1.5 2.5h6M4 0.5 2 6c2-2 4-2 4 0v3M9 4c-3 1-5 2.5-5 4s2 1.5 5 1" stroke="#cccccc" stroke-width="1.09" fill="none" stroke-linecap="round" stroke-linejoin="round"/></svg></i><i style="width:14px;height:16px"><svg style="left:1.25px;top:0.25px" width="11.5" height="11.5" viewBox="0 0 10 10"><path d="M.5 3h3.5M2.5 .5v9c0 .5-.5.5-1 .3M.5 7l3.5-2M5 1h4v5H5zM5 3.5h4M7 .5v9.5" stroke="#cccccc" stroke-width="1.09" fill="none" stroke-linecap="round" stroke-linejoin="round"/></svg></i><i style="width:14px;height:16px"><svg style="left:1.25px;top:0.25px" width="11.5" height="11.5" viewBox="0 0 10 10"><path d="M3 1v6c0 2.5 2 3 5.5 1" stroke="#cccccc" stroke-width="1.09" fill="none" stroke-linecap="round" stroke-linejoin="round"/></svg></i><i style="width:14px;height:16px"><svg style="left:1.25px;top:0.25px" width="11.5" height="11.5" viewBox="0 0 10 10"><path d="M1 2.5c2.5 0 5-.5 8-1.5-3 1-5 3-5 5s1.5 3 4 3" stroke="#cccccc" stroke-width="1.09" fill="none" stroke-linecap="round" stroke-linejoin="round"/></svg></i><i style="width:14px;height:16px"><svg style="left:1.25px;top:0.25px" width="11.5" height="11.5" viewBox="0 0 10 10"><path d="M6.5 1 2 5l4.5 4.5" stroke="#cccccc" stroke-width="1.09" fill="none" stroke-linecap="round" stroke-linejoin="round"/></svg></i><i style="width:14px;height:16px"><svg style="left:1.25px;top:0.25px" width="11.5" height="11.5" viewBox="0 0 10 10"><path d="M1 3h3.5M3 1c0 3-1 6-2 8.5M6 3.5h3M5.5 7c0 2 1 2.5 3.5 2.5M8.2 0.3l.7 1.4M9.5 0l.7 1.4" stroke="#cccccc" stroke-width="1.09" fill="none" stroke-linecap="round" stroke-linejoin="round"/></svg></i><i style="width:14px;height:16px"><svg style="left:1.25px;top:0.25px" width="11.5" height="11.5" viewBox="0 0 10 10"><path d="M1.5 3.5h7M4 1l3.5 6M2.5 7.5c.5 1.5 2 2 5 2" stroke="#cccccc" stroke-width="1.09" fill="none" stroke-linecap="round" stroke-linejoin="round"/></svg></i><i style="width:14px;height:16px"><svg style="left:1.25px;top:0.25px" width="11.5" height="11.5" viewBox="0 0 10 10"><path d="M2 2c-.5 3 0 6 1.5 7M7 3c1 1.5 1.5 3 1.5 5" stroke="#cccccc" stroke-width="1.09" fill="none" stroke-linecap="round" stroke-linejoin="round"/></svg></i><i style="width:14px;height:16px"><svg style="left:1.25px;top:0.25px" width="11.5" height="11.5" viewBox="0 0 10 10"><path d="M2.5 8.5m-1.3 0a1.3 1.3 0 1 0 2.6 0a1.3 1.3 0 1 0-2.6 0" stroke="#cccccc" stroke-width="1.09" fill="none" stroke-linecap="round" stroke-linejoin="round"/></svg></i></div>
<div class="a" style="left:368px;top:668px;width:7px;height:16px;background:#c8c8c8"></div>
<svg style="left:988px;top:575px" width="14" height="15" viewBox="0 0 14 15"><path d="M7 0.7 13 4v7L7 14.3 1 11V4z" stroke="#cccccc" stroke-width="1.1" fill="none"/><path d="M7 7.5 13 4M7 7.5V14.3M7 7.5 1 4" stroke="#cccccc" stroke-width="0.6" fill="none"/><path d="M7 7.5 13 4v7L7 14.3z" fill="#8a8a8a"/></svg>
<div class="t" style="left:1007px;top:575px;font-size:13px;color:#cccccc;line-height:16px;">bash</div>
<div class="t" style="left:1040px;top:575px;font-size:13px;color:#9d9d9d;line-height:16px;letter-spacing:-0.6px;">TM1637_pio</div>
<div class="a" style="left:978px;top:593px;width:204px;height:22px;background:#2a2a2d"></div>
<div class="a" style="left:977px;top:593px;width:1px;height:22px;background:#0078d4;box-shadow:1px 0 0 rgba(0,120,212,0.3)"></div>
<svg style="left:988px;top:597px" width="14" height="14" viewBox="0 0 14 14"><rect x="0.6" y="0.6" width="12.8" height="12.8" rx="1.5" stroke="#cccccc" stroke-width="1.1" fill="none"/><path d="M3 4l3 2.5L3 9M6.5 10.5h4.5" stroke="#cccccc" stroke-width="1.1" fill="none"/></svg>
<div class="t" style="left:1007px;top:597px;font-size:13px;color:#cccccc;line-height:16px;">Compile Project</div>
<div class="t" style="left:1103px;top:597px;font-size:13px;color:#9d9d9d;line-height:16px;"><i style="width:8.7px;height:16px"><svg style="left:-0.65px;top:2.00px" width="10" height="10" viewBox="0 0 10 10"><path d="M4 0.5c-.5 2-2 3.5-3.5 4.5M3.5 2h5c-.5 4-3 6.5-6 7.5M3 4.5l4 2.5" stroke="#9d9d9d" stroke-width="1.10" fill="none" stroke-linecap="round" stroke-linejoin="round"/></svg></i><i style="width:8.7px;height:16px"><svg style="left:-0.65px;top:2.00px" width="10" height="10" viewBox="0 0 10 10"><path d="M2 1.5h6c-1 3.5-3.5 6-7 8M5.5 6.5l3.5 3" stroke="#9d9d9d" stroke-width="1.10" fill="none" stroke-linecap="round" stroke-linejoin="round"/></svg></i><i style="width:8.7px;height:16px"><svg style="left:-0.65px;top:2.00px" width="10" height="10" viewBox="0 0 10 10"><path d="M4 0.5c-.5 2-2 3.5-3.5 4.5M3.5 2h5c-.5 4-3 6.5-6 7.5" stroke="#9d9d9d" stroke-width="1.10" fill="none" stroke-linecap="round" stroke-linejoin="round"/></svg></i></div>
<svg style="left:1158px;top:599px" width="14" height="10" viewBox="0 0 14 10"><path d="M0.8 5 4.8 9 13.2 0.8" stroke="#cccccc" stroke-width="1.2" fill="none"/></svg>
<div class="hl" style="left:0;top:764px;width:1183px"></div>
<div class="a" style="left:0;top:765px;width:104px;height:21px;background:#2c7fc8"></div>
<svg style="left:10px;top:767px" width="13" height="16" viewBox="0 0 13 16"><path d="M1 5 6.3 9.8 1 14.6M11.3 1.4 6.8 5.9 11.3 10.4" stroke="#ffffff" stroke-width="1.2" fill="none"/></svg>
<div class="t" style="left:27px;top:768px;font-size:12px;color:#ffffff;line-height:16px;letter-spacing:-0.3px;">WSL: Ubuntu</div>
<svg style="left:113px;top:768px" width="15" height="15" viewBox="0 0 15 15"><circle cx="7.5" cy="7.5" r="6.8" stroke="#cccccc" stroke-width="1.1" fill="none"/><path d="M4.8 4.8l5.4 5.4M10.2 4.8l-5.4 5.4" stroke="#cccccc" stroke-width="1.1"/></svg>
<div class="t" style="left:131px;top:768px;font-size:12px;color:#cccccc;line-height:16px;">0</div>
<svg style="left:142px;top:768px" width="15" height="14" viewBox="0 0 15 14"><path d="M7.5 0.8 14.3 13.3H0.7z" stroke="#cccccc" stroke-width="1.1" fill="none" stroke-linejoin="round"/><path d="M7.5 5v4.2M7.5 10.5v1.3" stroke="#cccccc" stroke-width="1.2"/></svg>
<div class="t" style="left:160px;top:768px;font-size:12px;color:#cccccc;line-height:16px;">0</div>
<svg style="left:184px;top:768px" width="14" height="15" viewBox="0 0 14 15"><circle cx="7" cy="5" r="1.4" fill="#cccccc"/><path d="M7 6.5 3.5 14.5M7 6.5l3.5 8M4.8 11.5h4.4M4.2 2.2a4 4 0 0 0 0 5.6M9.8 2.2a4 4 0 0 1 0 5.6M2.2 0.6a6.3 6.3 0 0 0 0 8.8M11.8 0.6a6.3 6.3 0 0 1 0 8.8" stroke="#cccccc" stroke-width="1.1" fill="none"/></svg>
<div class="t" style="left:202px;top:768px;font-size:12px;color:#cccccc;line-height:16px;">8</div>
<div class="t" style="left:396px;top:768px;font-size:12px;color:#cccccc;line-height:16px;"><i style="width:11px;height:16px"><svg style="left:0.40px;top:1.90px" width="10.2" height="10.2" viewBox="0 0 10 10"><path d="M3 .5C2.5 1.5 1.5 2.5.5 3M3 3.5C2.5 5 1.5 6 .5 7M2 5v5M5 1.5h4.5M4.5 4.5h5M7.5 4.5v5c0 .5-.5.5-1.5.5" stroke="#cccccc" stroke-width="1.08" fill="none" stroke-linecap="round" stroke-linejoin="round"/></svg></i> 42<i style="width:11px;height:16px"><svg style="left:0.40px;top:1.90px" width="10.2" height="10.2" viewBox="0 0 10 10"><path d="M1.5 7.5l1.5 1.5" stroke="#cccccc" stroke-width="1.08" fill="none" stroke-linecap="round" stroke-linejoin="round"/></svg></i><i style="width:11px;height:16px"><svg style="left:0.40px;top:1.90px" width="10.2" height="10.2" viewBox="0 0 10 10"><path d="M.5 1.5h5M3 1.5C2.5 5 1.5 7.5.5 9.5M2.5 4h3c-.5 3-2 5-3.5 6M7 2v5M9 .5v9.5" stroke="#cccccc" stroke-width="1.08" fill="none" stroke-linecap="round" stroke-linejoin="round"/></svg></i> 49</div>
<div class="t" style="left:476px;top:768px;font-size:12px;color:#cccccc;line-height:16px;"><i style="width:8px;height:16px"><svg style="left:-1.10px;top:1.90px" width="10.2" height="10.2" viewBox="0 0 10 10"><path d="M2 1.5h6c-1 3.5-3.5 6-7 8M5.5 6.5l3.5 3" stroke="#cccccc" stroke-width="1.08" fill="none" stroke-linecap="round" stroke-linejoin="round"/></svg></i><i style="width:8px;height:16px"><svg style="left:-1.10px;top:1.90px" width="10.2" height="10.2" viewBox="0 0 10 10"><path d="M0.5 6.5l3-3.5 6 5.5M9.2 1.3m-1 0a1 1 0 1 0 2 0a1 1 0 1 0-2 0" stroke="#cccccc" stroke-width="1.08" fill="none" stroke-linecap="round" stroke-linejoin="round"/></svg></i><i style="width:8px;height:16px"><svg style="left:-1.10px;top:1.90px" width="10.2" height="10.2" viewBox="0 0 10 10"><path d="M0.5 5h9" stroke="#cccccc" stroke-width="1.08" fill="none" stroke-linecap="round" stroke-linejoin="round"/></svg></i><i style="width:8px;height:16px"><svg style="left:-1.10px;top:1.90px" width="10.2" height="10.2" viewBox="0 0 10 10"><path d="M2 1.5h6c-1 3.5-3.5 6-7 8M5.5 6.5l3.5 3" stroke="#cccccc" stroke-width="1.08" fill="none" stroke-linecap="round" stroke-linejoin="round"/></svg></i>: 4</div>
<div class="t" style="left:541px;top:768px;font-size:12px;color:#cccccc;line-height:16px;letter-spacing:-0.3px;">UTF-8</div>
<div class="t" style="left:589px;top:768px;font-size:12px;color:#cccccc;line-height:16px;">LF</div>
<div class="t" style="left:616px;top:768px;font-size:12px;color:#cccccc;line-height:16px;">{ }</div>
<div class="t" style="left:637px;top:768px;font-size:12px;color:#cccccc;line-height:16px;"><i style="width:8.6px;height:16px"><svg style="left:-0.80px;top:1.90px" width="10.2" height="10.2" viewBox="0 0 10 10"><path d="M1.5 2h7.5c-.5 3.5-3 6.5-7 8M9.2 1.3m-1 0a1 1 0 1 0 2 0a1 1 0 1 0-2 0" stroke="#cccccc" stroke-width="1.08" fill="none" stroke-linecap="round" stroke-linejoin="round"/></svg></i><i style="width:8.6px;height:16px"><svg style="left:-0.80px;top:1.90px" width="10.2" height="10.2" viewBox="0 0 10 10"><path d="M2.5 1v8.5c3-1 5-2.5 7-5" stroke="#cccccc" stroke-width="1.08" fill="none" stroke-linecap="round" stroke-linejoin="round"/></svg></i><i style="width:8.6px;height:16px"><svg style="left:-0.80px;top:1.90px" width="10.2" height="10.2" viewBox="0 0 10 10"><path d="M0.5 5h9" stroke="#cccccc" stroke-width="1.08" fill="none" stroke-linecap="round" stroke-linejoin="round"/></svg></i><i style="width:8.6px;height:16px"><svg style="left:-0.80px;top:1.90px" width="10.2" height="10.2" viewBox="0 0 10 10"><path d="M1.5 2l2 1.5M1.5 9.5c3-1 6-3.5 7.5-7" stroke="#cccccc" stroke-width="1.08" fill="none" stroke-linecap="round" stroke-linejoin="round"/></svg></i><i style="width:8.6px;height:16px"><svg style="left:-0.80px;top:1.90px" width="10.2" height="10.2" viewBox="0 0 10 10"><path d="M2 1h6M1 3.5h8M5 3.5c0 3-1 5-3 6" stroke="#cccccc" stroke-width="1.08" fill="none" stroke-linecap="round" stroke-linejoin="round"/></svg></i><i style="width:8.6px;height:16px"><svg style="left:-0.80px;top:1.90px" width="10.2" height="10.2" viewBox="0 0 10 10"><path d="M1.5 3.5h7M1 6.5h8M4.5 1l1.5 9" stroke="#cccccc" stroke-width="1.08" fill="none" stroke-linecap="round" stroke-linejoin="round"/></svg></i><i style="width:8.6px;height:16px"><svg style="left:-0.80px;top:1.90px" width="10.2" height="10.2" viewBox="0 0 10 10"><path d="M2 1.5h6c-1 3.5-3.5 6-7 8M5.5 6.5l3.5 3" stroke="#cccccc" stroke-width="1.08" fill="none" stroke-linecap="round" stroke-linejoin="round"/></svg></i><i style="width:8.6px;height:16px"><svg style="left:-0.80px;top:1.90px" width="10.2" height="10.2" viewBox="0 0 10 10"><path d="M3.5 0.5v9.5M3.5 4l4.5 2" stroke="#cccccc" stroke-width="1.08" fill="none" stroke-linecap="round" stroke-linejoin="round"/></svg></i></div>
<div class="a" style="left:715px;top:765px;width:93px;height:20px;background:#313131"></div>
<svg style="left:722px;top:767px" width="17" height="16" viewBox="0 0 17 16"><path d="M3 4.5a3.5 3.5 0 0 1 7 0v0.5a2.5 2.5 0 0 1 2 2.5v1M3 4.5v0.5a2.5 2.5 0 0 0-2 2.5V10c0 1.5 1.5 2.5 3 3.2l3 1" stroke="#cccccc" stroke-width="1.2" fill="none"/><circle cx="6" cy="7.5" r="1" fill="#cccccc"/><circle cx="12" cy="11.5" r="4" fill="#cccccc"/><path d="M10.5 10l3 3M13.5 10l-3 3" stroke="#313131" stroke-width="1"/></svg>
<div class="t" style="left:742px;top:768px;font-size:12px;color:#cccccc;line-height:16px;">Signed out</div>
<svg style="left:818px;top:768px" width="11" height="14" viewBox="0 0 11 14"><path d="M0.6 0.6h6.3l3.5 3.5v9.3H0.6z" stroke="#cccccc" stroke-width="1.1" fill="none"/><text x="1.6" y="11.5" font-size="5.5" font-family="Liberation Mono" fill="#cccccc">01</text></svg>
<div class="t" style="left:835px;top:768px;font-size:12px;color:#cccccc;line-height:16px;">Compile</div>
<svg style="left:897px;top:769px" width="12" height="13" viewBox="0 0 12 13"><path d="M0.8 0.8 11 6.5 0.8 12.2z" stroke="#cccccc" stroke-width="1.1" fill="none" stroke-linejoin="round"/></svg>
<div class="t" style="left:914px;top:768px;font-size:12px;color:#cccccc;line-height:16px;">Run</div>
<div class="t" style="left:951px;top:768px;font-size:12px;color:#cccccc;line-height:16px;letter-spacing:-0.35px;">Pico SDK: 2.2.0</div>
<div class="t" style="left:1045px;top:768px;font-size:12px;color:#cccccc;line-height:16px;">Board: pico2</div>
<svg style="left:1128px;top:768px" width="15" height="15" viewBox="0 0 20 20"><path d="M10 0C10.8 6 14 9.2 20 10 14 10.8 10.8 14 10 20 9.2 14 6 10.8 0 10 6 9.2 9.2 6 10 0z" fill="#cccccc"/></svg>
<svg style="left:1160px;top:768px" width="15" height="14" viewBox="0 0 15 14"><path d="M2 11.5V6a4.5 4.5 0 0 1 6.5-4M11 6.5v5M0.8 11.5h11.4M5 12.5a1.6 1.6 0 0 0 3.2 0" stroke="#cccccc" stroke-width="1.1" fill="none"/><circle cx="11.5" cy="2.8" r="2.6" fill="#cccccc"/></svg>
<div class="a" style="left:2px;top:736px;width:170px;height:25px;border:1px solid #454545;border-radius:4px;background:#202020;z-index:20"></div>
<svg style="left:80px;top:760px;z-index:21" width="12" height="6" viewBox="0 0 12 6"><path d="M0 0 6 5.5 12 0z" fill="#202020"/><path d="M0 0 6 5.5 12 0" stroke="#454545" stroke-width="1" fill="none"/></svg>
<div class="t" style="left:11px;top:741px;font-size:12px;color:#cccccc;line-height:16px;z-index:22;">Ubuntu (WSL 2) <i style="width:11px;height:16px"><svg style="left:0.00px;top:2.50px" width="11" height="11" viewBox="0 0 10 10"><path d="M1 2.5c2.5 0 5-.5 8-1.5-3 1-5 3-5 5s1.5 3 4 3M8.2 0.3l.7 1.4M9.5 0l.7 1.4" stroke="#cccccc" stroke-width="1.09" fill="none" stroke-linecap="round" stroke-linejoin="round"/></svg></i><i style="width:11px;height:16px"><svg style="left:0.00px;top:2.50px" width="11" height="11" viewBox="0 0 10 10"><path d="M5 .5v1M1 3V1.5h8V3M2.5 3.5h5M2.5 5h5M1 6.8h8M5 3.5c0 3-2 5-4.5 6M5 6.8c1 1.5 2.5 2.5 4.5 3" stroke="#cccccc" stroke-width="1.09" fill="none" stroke-linecap="round" stroke-linejoin="round"/></svg></i><i style="width:11px;height:16px"><svg style="left:0.00px;top:2.50px" width="11" height="11" viewBox="0 0 10 10"><path d="M3 .5C2.5 1.5 1.5 2.5.5 3M3 3.5C2.5 5 1.5 6 .5 7M2 5v5M5 1.5h4.5M4.5 4.5h5M7.5 4.5v5c0 .5-.5.5-1.5.5" stroke="#cccccc" stroke-width="1.09" fill="none" stroke-linecap="round" stroke-linejoin="round"/></svg></i><i style="width:11px;height:16px"><svg style="left:0.00px;top:2.50px" width="11" height="11" viewBox="0 0 10 10"><path d="M1.5 3h7v4h-7zM5 0.5v9.5" stroke="#cccccc" stroke-width="1.09" fill="none" stroke-linecap="round" stroke-linejoin="round"/></svg></i><i style="width:11px;height:16px"><svg style="left:0.00px;top:2.50px" width="11" height="11" viewBox="0 0 10 10"><path d="M1 2.5c2.5 0 5-.5 8-1.5-3 1-5 3-5 5s1.5 3 4 3M8.2 0.3l.7 1.4M9.5 0l.7 1.4" stroke="#cccccc" stroke-width="1.09" fill="none" stroke-linecap="round" stroke-linejoin="round"/></svg></i><i style="width:11px;height:16px"><svg style="left:0.00px;top:2.50px" width="11" height="11" viewBox="0 0 10 10"><path d="M1 3h8M5.5 0.5v6.5c0 1-1 1.5-2 1s-1-2 0-2.5 2 .5 2 1.5-.5 2-2.5 3.5" stroke="#cccccc" stroke-width="1.09" fill="none" stroke-linecap="round" stroke-linejoin="round"/></svg></i></div>
</div><div id="frame"></div></body></html>
